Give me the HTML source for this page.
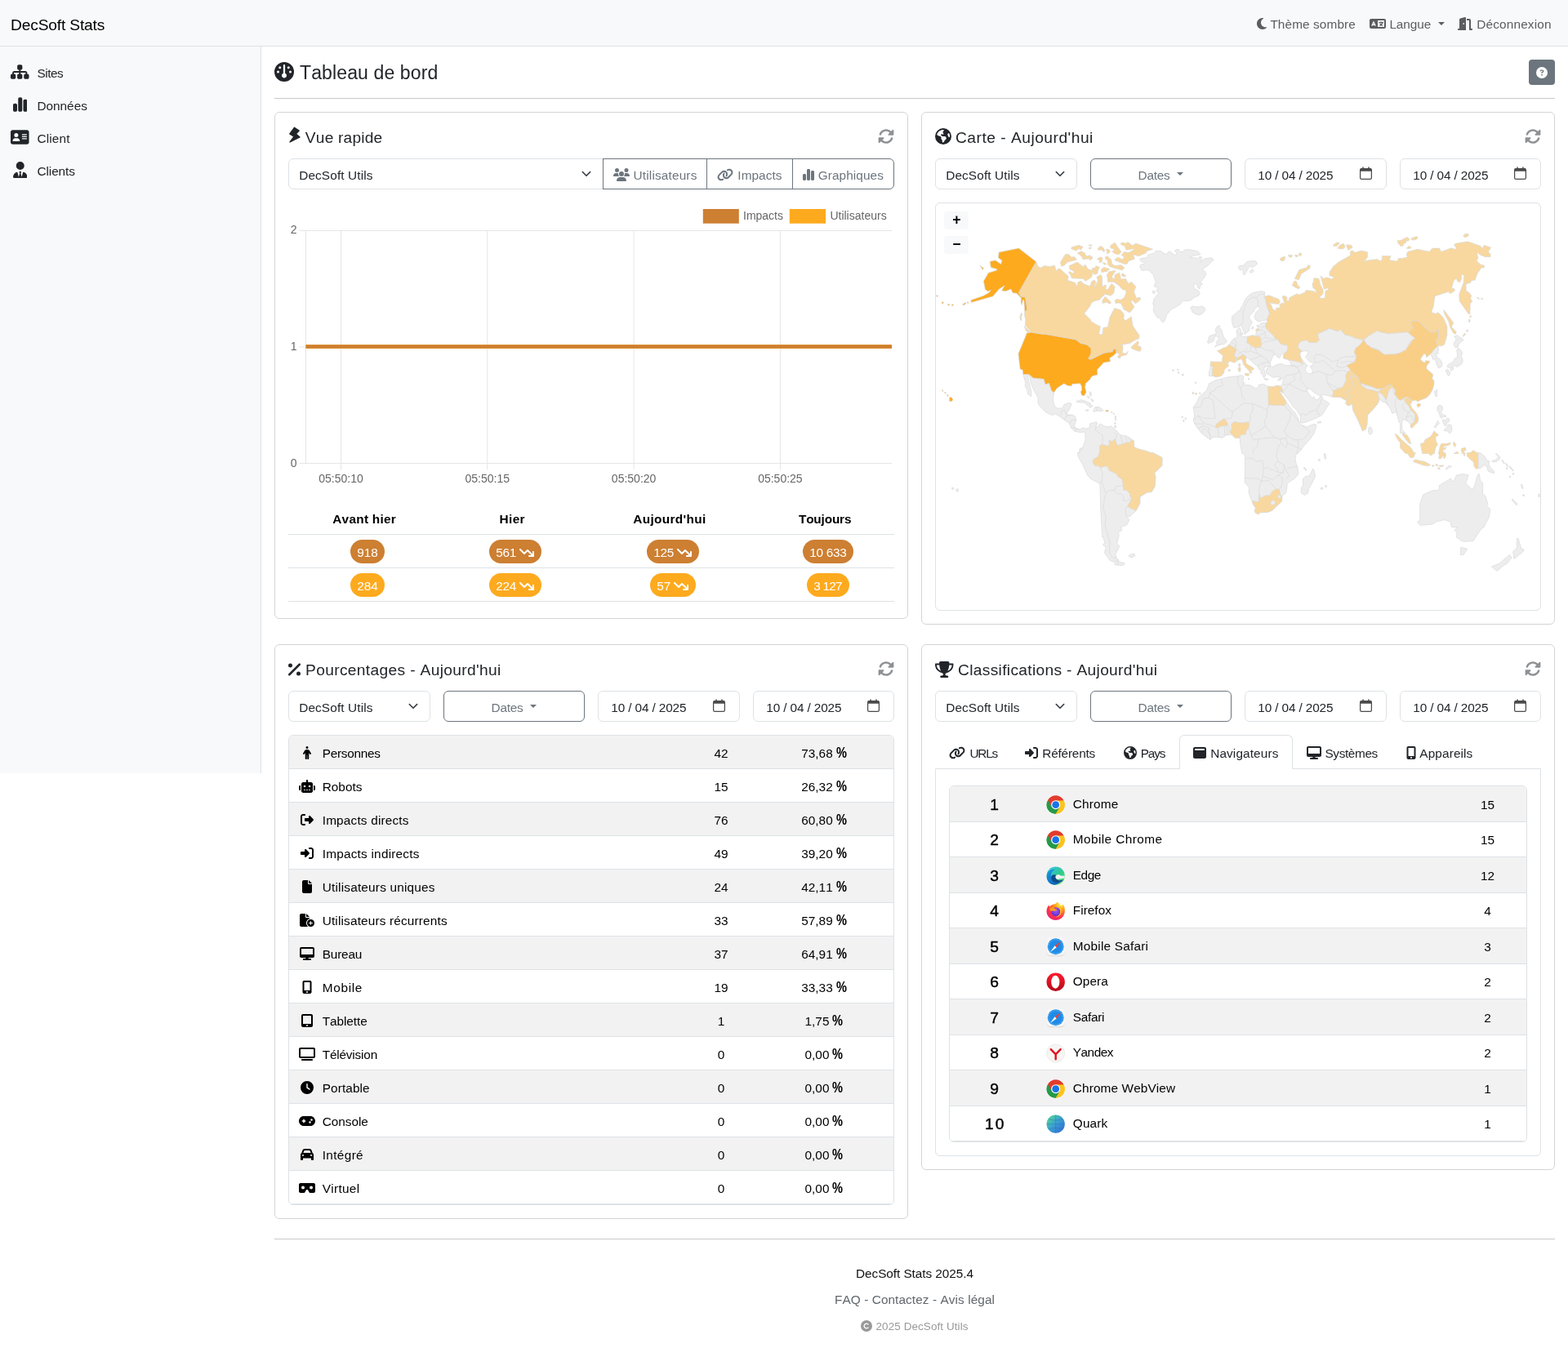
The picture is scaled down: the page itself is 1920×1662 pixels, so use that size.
<!DOCTYPE html>
<html lang="fr">
<head>
<meta charset="utf-8">
<title>DecSoft Stats - Tableau de bord</title>
<style>
*{box-sizing:border-box}
html,body{margin:0;padding:0;width:1920px;height:1662px;overflow:hidden;background:#fff}
body{position:relative;font-family:"Liberation Sans",sans-serif;font-size:16px;color:#212529;font-kerning:none;-webkit-font-smoothing:antialiased}
#page{position:absolute;left:0;top:0;width:1920px;height:1662px;overflow:hidden;will-change:transform;transform:translateZ(0)}
.t{position:absolute;white-space:pre;line-height:1;margin:0;font-weight:400}
.i{position:absolute;display:block}
.b{position:absolute}
.card{position:absolute;border:1px solid #d4d4d4;border-radius:6px;background:#fff}
.fc{position:absolute;border:1px solid #dee2e6;border-radius:6px;background:#fff}
.btn{position:absolute;border:1px solid #6c757d;border-radius:6px;background:transparent}
.hr{position:absolute;height:1px;background:#c8c9ca}
.row{position:absolute;left:0;right:0;border-top:1px solid #dee2e6}
.odd{background:#f2f2f2}
.pill{position:absolute;border-radius:50rem;height:29px}
svg text{font-family:"Liberation Sans",sans-serif}
</style>
</head>
<body>
<div id="page">
<nav class="b" style="left:0;top:0;width:1920px;height:57px;background:#f8f9fa;border-bottom:1px solid #dee2e6">
<span class="t" style="left:13px;top:20.65px;font-size:19.2px;color:#000;letter-spacing:-0.16px;">DecSoft Stats</span>
<svg class="i" style="left:1538.8px;top:21.2px;" width="12" height="16" viewBox="0 0 384 512" fill="#5b5d5f" aria-hidden="true"><path d="M223.5 32C100 32 0 132.3 0 256S100 480 223.5 480c60.6 0 115.5-24.2 155.8-63.4c5-4.9 6.3-12.5 3.1-18.7s-10.1-9.7-17-8.5c-9.8 1.7-19.8 2.6-30.1 2.6c-96.9 0-175.5-78.8-175.5-176c0-65.8 36-123.1 89.3-153.3c6.1-3.5 9.2-10.5 7.7-17.3s-7.3-11.9-14.3-12.5c-6.3-.5-12.6-.8-19-.8z"/></svg>
<span class="t" style="left:1555.4px;top:21.8px;font-size:15.36px;color:#5b5d5f;letter-spacing:0.1px;">Thème sombre</span>
<svg class="i" style="left:1677.3px;top:21.2px;" width="20" height="16" viewBox="0 0 640 512" fill="#5b5d5f" aria-hidden="true"><path d="M0 128C0 92.7 28.7 64 64 64l192 0 48 0 16 0 256 0c35.3 0 64 28.7 64 64l0 256c0 35.3-28.7 64-64 64l-256 0-16 0-48 0L64 448c-35.3 0-64-28.7-64-64L0 128zm320 0l0 256 256 0 0-256-256 0zM178.3 175.9c-3.2-7.2-10.4-11.9-18.3-11.9s-15.1 4.7-18.3 11.9l-64 144c-4.5 10.1 .1 21.9 10.2 26.4s21.9-.1 26.4-10.2l8.9-20.1 73.6 0 8.9 20.1c4.5 10.1 16.3 14.6 26.4 10.2s14.6-16.3 10.2-26.4l-64-144zM160 233.2L179 276l-38 0 19-42.8zM448 164c11 0 20 9 20 20l0 4 44 0 16 0c11 0 20 9 20 20s-9 20-20 20l-2 0-1.6 4.5c-8.9 24.4-22.4 46.6-39.6 65.4c.9 .6 1.8 1.1 2.7 1.6l18.9 11.3c9.5 5.7 12.5 18 6.9 27.4s-18 12.5-27.4 6.9l-18.9-11.3c-4.5-2.7-8.8-5.5-13.1-8.5c-10.6 7.5-21.9 14-34 19.4l-3.6 1.6c-10.1 4.5-21.9-.1-26.4-10.2s.1-21.9 10.2-26.4l3.6-1.6c6.4-2.9 12.6-6.1 18.5-9.8l-12.2-12.2c-7.8-7.8-7.8-20.5 0-28.3s20.5-7.8 28.3 0l14.6 14.6 .5 .5c12.4-13.1 22.5-28.3 29.8-45L448 228l-72 0c-11 0-20-9-20-20s9-20 20-20l52 0 0-4c0-11 9-20 20-20z"/></svg>
<span class="t" style="left:1701.4px;top:21.8px;font-size:15.36px;color:#5b5d5f;letter-spacing:-0.09px;">Langue</span>
<span class="b" style="left:1760.6px;top:26.8px;width:0;height:0;border-left:4.2px solid transparent;border-right:4.2px solid transparent;border-top:4.6px solid #5b5d5f"></span>
<svg class="i" style="left:1785px;top:21.2px;" width="18" height="16" viewBox="0 0 576 512" fill="#5b5d5f" aria-hidden="true"><path d="M320 32c0-9.9-4.5-19.2-12.3-25.2S289.8-1.4 280.2 1l-179.9 45C79 51.3 64 70.5 64 92.5L64 448l-32 0c-17.7 0-32 14.3-32 32s14.3 32 32 32l64 0 192 0 32 0 0-32 0-448zM256 256c0 17.7-10.7 32-24 32s-24-14.3-24-32s10.7-32 24-32s24 14.3 24 32zm96-128l96 0 0 352c0 17.7 14.3 32 32 32l64 0c17.7 0 32-14.3 32-32s-14.3-32-32-32l-32 0 0-320c0-35.3-28.7-64-64-64l-96 0 0 64z"/></svg>
<span class="t" style="left:1808.2px;top:21.8px;font-size:15.36px;color:#5b5d5f;letter-spacing:0.17px;">Déconnexion</span>
</nav>
<aside class="b" style="left:0;top:57px;width:320px;height:890px;background:#f8f9fa;border-right:1px solid #dee2e6">
<svg class="i" style="left:13.25px;top:21px;" width="22.5" height="20" viewBox="0 0 576 512" fill="#212529" aria-hidden="true"><path d="M208 80c0-26.5 21.5-48 48-48l64 0c26.5 0 48 21.5 48 48l0 64c0 26.5-21.5 48-48 48l-8 0 0 40 152 0c30.9 0 56 25.1 56 56l0 32 8 0c26.5 0 48 21.5 48 48l0 64c0 26.5-21.5 48-48 48l-64 0c-26.5 0-48-21.5-48-48l0-64c0-26.5 21.5-48 48-48l8 0 0-32c0-4.4-3.6-8-8-8l-152 0 0 40 8 0c26.5 0 48 21.5 48 48l0 64c0 26.5-21.5 48-48 48l-64 0c-26.5 0-48-21.5-48-48l0-64c0-26.5 21.5-48 48-48l8 0 0-40-152 0c-4.4 0-8 3.6-8 8l0 32 8 0c26.5 0 48 21.5 48 48l0 64c0 26.5-21.5 48-48 48l-64 0c-26.5 0-48-21.5-48-48l0-64c0-26.5 21.5-48 48-48l8 0 0-32c0-30.9 25.1-56 56-56l152 0 0-40-8 0c-26.5 0-48-21.5-48-48l0-64z"/></svg>
<span class="t" style="left:45.4px;top:24.6px;font-size:15.36px;color:#212529;letter-spacing:-0.46px;">Sites</span>
<svg class="i" style="left:15.75px;top:61px;" width="17.5" height="20" viewBox="0 0 448 512" fill="#212529" aria-hidden="true"><path d="M160 80c0-26.5 21.5-48 48-48l32 0c26.5 0 48 21.5 48 48l0 352c0 26.5-21.5 48-48 48l-32 0c-26.5 0-48-21.5-48-48l0-352zM0 272c0-26.5 21.5-48 48-48l32 0c26.5 0 48 21.5 48 48l0 160c0 26.5-21.5 48-48 48l-32 0c-26.5 0-48-21.5-48-48L0 272zM368 96l32 0c26.5 0 48 21.5 48 48l0 288c0 26.5-21.5 48-48 48l-32 0c-26.5 0-48-21.5-48-48l0-288c0-26.5 21.5-48 48-48z"/></svg>
<span class="t" style="left:45.4px;top:64.6px;font-size:15.36px;color:#212529;">Données</span>
<svg class="i" style="left:13.25px;top:101px;" width="22.5" height="20" viewBox="0 0 576 512" fill="#212529" aria-hidden="true"><path d="M64 32C28.7 32 0 60.7 0 96L0 416c0 35.3 28.7 64 64 64l448 0c35.3 0 64-28.7 64-64l0-320c0-35.3-28.7-64-64-64L64 32zm80 256l64 0c44.2 0 80 35.8 80 80c0 8.8-7.2 16-16 16L80 384c-8.8 0-16-7.2-16-16c0-44.2 35.8-80 80-80zm-32-96a64 64 0 1 1 128 0 64 64 0 1 1 -128 0zm256-32l128 0c8.8 0 16 7.2 16 16s-7.2 16-16 16l-128 0c-8.8 0-16-7.2-16-16s7.2-16 16-16zm0 64l128 0c8.8 0 16 7.2 16 16s-7.2 16-16 16l-128 0c-8.8 0-16-7.2-16-16s7.2-16 16-16zm0 64l128 0c8.8 0 16 7.2 16 16s-7.2 16-16 16l-128 0c-8.8 0-16-7.2-16-16s7.2-16 16-16z"/></svg>
<span class="t" style="left:45.4px;top:104.6px;font-size:15.36px;color:#212529;letter-spacing:0.15px;">Client</span>
<svg class="i" style="left:15.75px;top:141px;" width="17.5" height="20" viewBox="0 0 448 512" fill="#212529" aria-hidden="true"><path d="M96 128a128 128 0 1 0 256 0A128 128 0 1 0 96 128zm94.5 200.2l18.6 31L175.8 483.1l-36-146.9c-2-8.1-9.8-13.4-17.9-11.3C51.9 342.4 0 405.8 0 481.3c0 17 13.8 30.7 30.7 30.7l131.7 0c0 0 0 0 .1 0l5.5 0 112 0 5.5 0c0 0 0 0 .1 0l131.7 0c17 0 30.7-13.8 30.7-30.7c0-75.5-51.9-138.9-121.9-156.4c-8.1-2-15.9 3.3-17.9 11.3l-36 146.9L238.9 359.2l18.6-31c6.4-10.7-1.3-24.2-13.7-24.2L224 304l-19.7 0c-12.4 0-20.1 13.6-13.7 24.2z"/></svg>
<span class="t" style="left:45.4px;top:144.6px;font-size:15.36px;color:#212529;letter-spacing:-0.06px;">Clients</span>
</aside>
<main>
<svg class="i" style="left:336px;top:76px;" width="24" height="24" viewBox="0 0 512 512" fill="#212529" aria-hidden="true"><path d="M0 256a256 256 0 1 1 512 0A256 256 0 1 1 0 256zm320 96c0-26.9-16.5-49.9-40-59.3L280 88c0-13.3-10.7-24-24-24s-24 10.7-24 24l0 204.7c-23.5 9.5-40 32.5-40 59.3c0 35.3 28.7 64 64 64s64-28.7 64-64zM144 176a32 32 0 1 0 0-64 32 32 0 1 0 0 64zm-16 80a32 32 0 1 0 -64 0 32 32 0 1 0 64 0zm288 32a32 32 0 1 0 0-64 32 32 0 1 0 0 64zM400 144a32 32 0 1 0 -64 0 32 32 0 1 0 64 0z"/></svg>
<h1 class="t" style="left:367px;top:78.2px;font-size:23.04px;color:#212529;letter-spacing:0.11px;">Tableau de bord</h1>
<div class="b" style="left:1872px;top:73px;width:32px;height:31px;background:#6c757d;border-radius:4px"></div>
<svg class="i" style="left:1881px;top:81.5px;" width="14" height="14" viewBox="0 0 512 512" fill="#fff" aria-hidden="true"><path d="M256 512A256 256 0 1 0 256 0a256 256 0 1 0 0 512zM169.8 165.3c7.9-22.3 29.1-37.3 52.8-37.3l58.3 0c34.9 0 63.1 28.3 63.1 63.1c0 22.6-12.1 43.5-31.7 54.8L280 264.4c-.2 13-10.9 23.6-24 23.6c-13.3 0-24-10.7-24-24l0-13.5c0-8.6 4.6-16.5 12.1-20.8l44.3-25.4c4.7-2.7 7.6-7.7 7.6-13.1c0-8.4-6.8-15.1-15.1-15.1l-58.3 0c-3.4 0-6.4 2.1-7.5 5.3l-.4 1.2c-4.4 12.5-18.2 19-30.6 14.6s-19-18.2-14.6-30.6l.4-1.2zM224 352a32 32 0 1 1 64 0 32 32 0 1 1 -64 0z"/></svg>
<div class="hr" style="left:336px;top:120px;width:1568px"></div>
<section class="card" style="left:336px;top:137px;width:776px;height:621px">
<svg class="i" style="left:15px;top:16px" width="18" height="22" viewBox="352 154 18 22" aria-hidden="true"><path d="M360.5 156.2 L366.2 160 L362.4 164 L367.1 168 L355 174 L359.9 167.3 L354.8 163.9Z" fill="#212529" stroke="#212529" stroke-width="1.3" stroke-linejoin="round"/></svg>
<h2 class="t" style="left:36.8px;top:20.95px;font-size:19.2px;color:#212529;letter-spacing:0.18px;">Vue rapide</h2>
<svg class="i" style="left:738px;top:19px;" width="20" height="20" viewBox="0 0 512 512" fill="#8e9194" aria-hidden="true"><path d="M142.9 142.9c-17.5 17.5-30.1 38-37.8 59.8c-5.9 16.7-24.2 25.4-40.8 19.5s-25.4-24.2-19.5-40.8C55.6 150.7 73.2 122 97.6 97.6c87.2-87.2 228.3-87.5 315.8-1L455 55c6.9-6.9 17.2-8.9 26.2-5.2s14.8 12.5 14.8 22.2l0 128c0 13.3-10.7 24-24 24l-8.4 0c0 0 0 0 0 0L344 224c-9.7 0-18.5-5.8-22.2-14.8s-1.7-19.3 5.2-26.2l41.1-41.1c-62.6-61.5-163.1-61.2-225.3 1zM16 312c0-13.3 10.7-24 24-24l7.6 0 .7 0L168 288c9.7 0 18.5 5.8 22.2 14.8s1.7 19.3-5.2 26.2l-41.1 41.1c62.6 61.5 163.1 61.2 225.3-1c17.5-17.5 30.1-38 37.8-59.8c5.9-16.7 24.2-25.4 40.8-19.5s25.4 24.2 19.5 40.8c-10.8 30.6-28.4 59.3-52.9 83.8c-87.2 87.2-228.3 87.5-315.8 1L57 457c-6.9 6.9-17.2 8.9-26.2 5.2S16 449.7 16 440l0-119.6 0-.7 0-7.6z"/></svg>
<div class="fc" style="left:16px;top:56px;width:386px;height:38px;border-radius:6px 0 0 6px"></div>
<span class="t" style="left:29.2px;top:68.6px;font-size:15.36px;color:#212529;letter-spacing:0.12px;">DecSoft Utils</span>
<svg class="i" style="left:373.1px;top:69.3px" width="16" height="12" viewBox="0 0 16 12"><path d="M3.3 3.5 L8 8.3 L12.7 3.5" fill="none" stroke="#343a40" stroke-width="1.6" stroke-linecap="round" stroke-linejoin="round"/></svg>
<div class="btn" style="left:401px;top:56px;width:128px;height:38px;border-radius:0"></div>
<div class="btn" style="left:528px;top:56px;width:106px;height:38px;border-radius:0"></div>
<div class="btn" style="left:633px;top:56px;width:125px;height:38px;border-radius:0 6px 6px 0"></div>
<svg class="i" style="left:414.2px;top:67.8px;" width="20" height="16" viewBox="0 0 640 512" fill="#6c757d" aria-hidden="true"><path d="M144 0a80 80 0 1 1 0 160A80 80 0 1 1 144 0zM512 0a80 80 0 1 1 0 160A80 80 0 1 1 512 0zM0 298.7C0 239.8 47.8 192 106.7 192l42.7 0c15.9 0 31 3.5 44.6 9.7c-1.3 7.2-1.9 14.7-1.9 22.3c0 38.2 16.8 72.5 43.3 96c-.2 0-.4 0-.7 0L21.3 320C9.6 320 0 310.4 0 298.7zM405.3 320c-.2 0-.4 0-.7 0c26.6-23.5 43.3-57.8 43.3-96c0-7.6-.7-15-1.9-22.3c13.6-6.3 28.7-9.7 44.6-9.7l42.7 0C592.2 192 640 239.8 640 298.7c0 11.8-9.6 21.3-21.3 21.3l-213.3 0zM224 224a96 96 0 1 1 192 0 96 96 0 1 1 -192 0zM128 485.3C128 411.7 187.7 352 261.3 352l117.3 0C452.3 352 512 411.7 512 485.3c0 14.7-11.9 26.7-26.7 26.7l-330.7 0c-14.7 0-26.7-11.9-26.7-26.7z"/></svg>
<span class="t" style="left:438.6px;top:68.8px;font-size:15.36px;color:#6c757d;letter-spacing:0.16px;">Utilisateurs</span>
<svg class="i" style="left:541.2px;top:67.8px;" width="20" height="16" viewBox="0 0 640 512" fill="#6c757d" aria-hidden="true"><path d="M579.8 267.7c56.5-56.5 56.5-148 0-204.5c-50-50-128.8-56.5-186.3-15.4l-1.6 1.1c-14.4 10.3-17.7 30.3-7.4 44.6s30.3 17.7 44.6 7.4l1.6-1.1c32.1-22.9 76-19.3 103.8 8.6c31.5 31.5 31.5 82.5 0 114L422.3 334.8c-31.5 31.5-82.5 31.5-114 0c-27.9-27.9-31.5-71.8-8.6-103.8l1.1-1.6c10.3-14.4 6.9-34.4-7.4-44.6s-34.4-6.9-44.6 7.4l-1.1 1.6C206.5 251.2 213 330 263 380c56.5 56.5 148 56.5 204.5 0L579.8 267.7zM60.2 244.3c-56.5 56.5-56.5 148 0 204.5c50 50 128.8 56.5 186.3 15.4l1.6-1.1c14.4-10.3 17.7-30.3 7.4-44.6s-30.3-17.7-44.6-7.4l-1.6 1.1c-32.1 22.9-76 19.3-103.8-8.6C74 372 74 321 105.5 289.5L217.7 177.2c31.5-31.5 82.5-31.5 114 0c27.9 27.9 31.5 71.8 8.6 103.9l-1.1 1.6c-10.3 14.4-6.9 34.4 7.4 44.6s34.4 6.9 44.6-7.4l1.1-1.6C433.5 260.8 427 182 377 132c-56.5-56.5-148-56.5-204.5 0L60.2 244.3z"/></svg>
<span class="t" style="left:566.3px;top:68.8px;font-size:15.36px;color:#6c757d;letter-spacing:0.07px;">Impacts</span>
<svg class="i" style="left:646px;top:67.8px;" width="14" height="16" viewBox="0 0 448 512" fill="#6c757d" aria-hidden="true"><path d="M160 80c0-26.5 21.5-48 48-48l32 0c26.5 0 48 21.5 48 48l0 352c0 26.5-21.5 48-48 48l-32 0c-26.5 0-48-21.5-48-48l0-352zM0 272c0-26.5 21.5-48 48-48l32 0c26.5 0 48 21.5 48 48l0 160c0 26.5-21.5 48-48 48l-32 0c-26.5 0-48-21.5-48-48L0 272zM368 96l32 0c26.5 0 48 21.5 48 48l0 288c0 26.5-21.5 48-48 48l-32 0c-26.5 0-48-21.5-48-48l0-288c0-26.5 21.5-48 48-48z"/></svg>
<span class="t" style="left:664.7px;top:68.8px;font-size:15.36px;color:#6c757d;letter-spacing:0.09px;">Graphiques</span>
<svg class="i" style="left:16px;top:110px" width="742" height="352" viewBox="353 248 742 352" font-size="14" fill="#666"><rect x="860.8" y="256" width="44" height="17.7" fill="#cd7f32"/><rect x="966.8" y="256" width="44.2" height="17.7" fill="#fdaa1e"/><text x="910" y="269.2">Impacts</text><text x="1016.4" y="269.2">Utilisateurs</text><g stroke="#e5e5e5" stroke-width="1" fill="none"><path d="M366.5 282.5 H1092"/><path d="M366.5 425 H1092"/><path d="M366.5 567.5 H1092"/><path d="M374.5 282.5 V567.5"/><path d="M417.5 282.5 V575.5"/><path d="M596.8 282.5 V575.5"/><path d="M776.1 282.5 V575.5"/><path d="M955.4 282.5 V575.5"/></g><path d="M374.5 424.6 H1092" stroke="#f0a030" stroke-width="5" fill="none"/><path d="M374.5 424.6 H1092" stroke="#cd7f32" stroke-width="4" fill="none"/><text x="363.5" y="285.8" text-anchor="end">2</text><text x="363.5" y="428.8" text-anchor="end">1</text><text x="363.5" y="571.8" text-anchor="end">0</text><text x="417.5" y="590.8" text-anchor="middle">05:50:10</text><text x="596.8" y="590.8" text-anchor="middle">05:50:15</text><text x="776.1" y="590.8" text-anchor="middle">05:50:20</text><text x="955.4" y="590.8" text-anchor="middle">05:50:25</text></svg>
<span class="t" style="left:70.25px;top:490.3px;font-size:15.36px;color:#000;font-weight:700;letter-spacing:0.27px;">Avant hier</span>
<span class="t" style="left:274.4px;top:490.3px;font-size:15.36px;color:#000;font-weight:700;letter-spacing:0.44px;">Hier</span>
<span class="t" style="left:438.2px;top:490.3px;font-size:15.36px;color:#000;font-weight:700;letter-spacing:0.36px;">Aujourd'hui</span>
<span class="t" style="left:640.95px;top:490.3px;font-size:15.36px;color:#000;font-weight:700;letter-spacing:-0.17px;">Toujours</span>
<div class="b" style="left:16px;top:516px;width:742px;height:1px;background:#dee2e6"></div>
<div class="b" style="left:16px;top:557px;width:742px;height:1px;background:#dee2e6"></div>
<div class="b" style="left:16px;top:598px;width:742px;height:1px;background:#dee2e6"></div>
<div class="pill" style="left:92.1px;top:523px;width:41.8px;height:29px;background:#cd7f32"></div>
<span class="t" style="left:100.3px;top:531px;font-size:15.36px;color:#fff;letter-spacing:-0.11px;">918</span>
<div class="pill" style="left:262px;top:523px;width:64px;height:29px;background:#cd7f32"></div>
<span class="t" style="left:270.2px;top:531px;font-size:15.36px;color:#fff;letter-spacing:-0.21px;">561</span>
<svg class="i" style="left:299.4px;top:530.6px;" width="18" height="16" viewBox="0 0 576 512" fill="#fff" aria-hidden="true"><path d="M384 352c-17.7 0-32 14.3-32 32s14.3 32 32 32l160 0c17.7 0 32-14.3 32-32l0-160c0-17.7-14.3-32-32-32s-32 14.3-32 32l0 82.7L342.6 137.4c-12.5-12.5-32.8-12.5-45.3 0L192 242.7 54.6 105.4c-12.5-12.5-32.8-12.5-45.3 0s-12.5 32.8 0 45.3l160 160c12.5 12.5 32.8 12.5 45.3 0L320 205.3 466.7 352 384 352z"/></svg>
<div class="pill" style="left:455.1px;top:523px;width:63.8px;height:29px;background:#cd7f32"></div>
<span class="t" style="left:463.3px;top:531px;font-size:15.36px;color:#fff;letter-spacing:-0.31px;">125</span>
<svg class="i" style="left:492.3px;top:530.6px;" width="18" height="16" viewBox="0 0 576 512" fill="#fff" aria-hidden="true"><path d="M384 352c-17.7 0-32 14.3-32 32s14.3 32 32 32l160 0c17.7 0 32-14.3 32-32l0-160c0-17.7-14.3-32-32-32s-32 14.3-32 32l0 82.7L342.6 137.4c-12.5-12.5-32.8-12.5-45.3 0L192 242.7 54.6 105.4c-12.5-12.5-32.8-12.5-45.3 0s-12.5 32.8 0 45.3l160 160c12.5 12.5 32.8 12.5 45.3 0L320 205.3 466.7 352 384 352z"/></svg>
<div class="pill" style="left:646px;top:523px;width:62px;height:29px;background:#cd7f32"></div>
<span class="t" style="left:654.2px;top:531px;font-size:15.36px;color:#fff;letter-spacing:-0.28px;">10 633</span>
<div class="pill" style="left:92.1px;top:564px;width:41.8px;height:29px;background:#fdaa1e"></div>
<span class="t" style="left:100.3px;top:572px;font-size:15.36px;color:#fff;letter-spacing:-0.11px;">284</span>
<div class="pill" style="left:262px;top:564px;width:64px;height:29px;background:#fdaa1e"></div>
<span class="t" style="left:270.2px;top:572px;font-size:15.36px;color:#fff;letter-spacing:-0.21px;">224</span>
<svg class="i" style="left:299.4px;top:571.6px;" width="18" height="16" viewBox="0 0 576 512" fill="#fff" aria-hidden="true"><path d="M384 352c-17.7 0-32 14.3-32 32s14.3 32 32 32l160 0c17.7 0 32-14.3 32-32l0-160c0-17.7-14.3-32-32-32s-32 14.3-32 32l0 82.7L342.6 137.4c-12.5-12.5-32.8-12.5-45.3 0L192 242.7 54.6 105.4c-12.5-12.5-32.8-12.5-45.3 0s-12.5 32.8 0 45.3l160 160c12.5 12.5 32.8 12.5 45.3 0L320 205.3 466.7 352 384 352z"/></svg>
<div class="pill" style="left:459.05px;top:564px;width:55.9px;height:29px;background:#fdaa1e"></div>
<span class="t" style="left:467.25px;top:572px;font-size:15.36px;color:#fff;letter-spacing:0.02px;">57</span>
<svg class="i" style="left:488.35px;top:571.6px;" width="18" height="16" viewBox="0 0 576 512" fill="#fff" aria-hidden="true"><path d="M384 352c-17.7 0-32 14.3-32 32s14.3 32 32 32l160 0c17.7 0 32-14.3 32-32l0-160c0-17.7-14.3-32-32-32s-32 14.3-32 32l0 82.7L342.6 137.4c-12.5-12.5-32.8-12.5-45.3 0L192 242.7 54.6 105.4c-12.5-12.5-32.8-12.5-45.3 0s-12.5 32.8 0 45.3l160 160c12.5 12.5 32.8 12.5 45.3 0L320 205.3 466.7 352 384 352z"/></svg>
<div class="pill" style="left:651.15px;top:564px;width:51.7px;height:29px;background:#fdaa1e"></div>
<span class="t" style="left:659.35px;top:572px;font-size:15.36px;color:#fff;letter-spacing:-0.78px;">3 127</span>
</section>
<section class="card" style="left:1128px;top:137px;width:776px;height:628px">
<svg class="i" style="left:16px;top:19.2px;" width="20" height="20" viewBox="0 0 512 512" fill="#212529" aria-hidden="true"><path d="M57.7 193l9.4 16.4c8.3 14.5 21.9 25.2 38 29.8L163 255.7c17.2 4.9 29 20.6 29 38.5l0 39.9c0 11 6.2 21 16 25.9s16 14.9 16 25.9l0 39c0 15.6 14.9 26.9 29.9 22.6c16.1-4.6 28.6-17.5 32.7-33.8l2.8-11.2c4.2-16.9 15.2-31.4 30.3-40l8.1-4.6c15-8.5 24.2-24.5 24.2-41.7l0-8.3c0-12.7-5.1-24.9-14.1-33.9l-3.9-3.9c-9-9-21.2-14.1-33.9-14.1L257 256c-11.1 0-22.1-2.9-31.8-8.4l-34.5-19.7c-4.3-2.5-7.6-6.5-9.2-11.2c-3.2-9.6 1.1-20 10.2-24.5l5.9-3c6.6-3.3 14.3-3.9 21.3-1.5l23.2 7.7c8.2 2.7 17.2-.4 21.9-7.5c4.7-7 4.2-16.3-1.2-22.8l-13.6-16.3c-10-12-9.9-29.5 .3-41.3l15.7-18.3c8.8-10.3 10.2-25 3.5-36.7l-2.4-4.2c-3.5-.2-6.9-.3-10.4-.3C163.1 48 84.4 108.9 57.7 193zM464 256c0-36.8-9.6-71.4-26.4-101.5L412 164.8c-15.7 6.3-23.8 23.8-18.5 39.8l16.9 50.7c3.5 10.4 12 18.3 22.6 20.9l29.1 7.3c1.2-9 1.8-18.2 1.8-27.5zM0 256a256 256 0 1 1 512 0A256 256 0 1 1 0 256z"/></svg>
<h2 class="t" style="left:41px;top:20.95px;font-size:19.2px;color:#212529;letter-spacing:0.5px;">Carte - Aujourd'hui</h2>
<svg class="i" style="left:738px;top:19px;" width="20" height="20" viewBox="0 0 512 512" fill="#8e9194" aria-hidden="true"><path d="M142.9 142.9c-17.5 17.5-30.1 38-37.8 59.8c-5.9 16.7-24.2 25.4-40.8 19.5s-25.4-24.2-19.5-40.8C55.6 150.7 73.2 122 97.6 97.6c87.2-87.2 228.3-87.5 315.8-1L455 55c6.9-6.9 17.2-8.9 26.2-5.2s14.8 12.5 14.8 22.2l0 128c0 13.3-10.7 24-24 24l-8.4 0c0 0 0 0 0 0L344 224c-9.7 0-18.5-5.8-22.2-14.8s-1.7-19.3 5.2-26.2l41.1-41.1c-62.6-61.5-163.1-61.2-225.3 1zM16 312c0-13.3 10.7-24 24-24l7.6 0 .7 0L168 288c9.7 0 18.5 5.8 22.2 14.8s1.7 19.3-5.2 26.2l-41.1 41.1c62.6 61.5 163.1 61.2 225.3-1c17.5-17.5 30.1-38 37.8-59.8c5.9-16.7 24.2-25.4 40.8-19.5s25.4 24.2 19.5 40.8c-10.8 30.6-28.4 59.3-52.9 83.8c-87.2 87.2-228.3 87.5-315.8 1L57 457c-6.9 6.9-17.2 8.9-26.2 5.2S16 449.7 16 440l0-119.6 0-.7 0-7.6z"/></svg>
<div class="fc" style="left:16px;top:56px;width:174px;height:38px;"></div>
<span class="t" style="left:29.2px;top:68.6px;font-size:15.36px;color:#212529;letter-spacing:0.12px;">DecSoft Utils</span>
<svg class="i" style="left:161px;top:69.3px" width="16" height="12" viewBox="0 0 16 12"><path d="M3.3 3.5 L8 8.3 L12.7 3.5" fill="none" stroke="#343a40" stroke-width="1.6" stroke-linecap="round" stroke-linejoin="round"/></svg>
<div class="btn" style="left:206px;top:56px;width:173px;height:38px;"></div>
<span class="t" style="left:264.6px;top:68.6px;font-size:15.36px;color:#6c757d;letter-spacing:-0.28px;">Dates</span>
<span class="b" style="left:311.6px;top:73px;width:0;height:0;border-left:4.2px solid transparent;border-right:4.2px solid transparent;border-top:4.6px solid #6c757d"></span>
<div class="fc" style="left:395px;top:56px;width:174px;height:38px;"></div>
<span class="t" style="left:411.3px;top:68.6px;font-size:15.36px;color:#212529;letter-spacing:-0.13px;">10 / 04 / 2025</span>
<svg class="i" style="left:534.8px;top:65.5px" width="17" height="17" viewBox="0 0 17 17"><rect x="1.6" y="2.6" width="13.8" height="12.8" rx="1.6" fill="none" stroke="#4a4a4a" stroke-width="1.25"/><path d="M1.6 3.6 a1 1 0 0 1 1-1 h11.8 a1 1 0 0 1 1 1 v2.2 h-13.8z M4.3 0.6h1.5v2.6H4.3z M11.2 0.6h1.5v2.6h-1.5z" fill="#4a4a4a"/></svg>
<div class="fc" style="left:585px;top:56px;width:173px;height:38px;"></div>
<span class="t" style="left:601.3px;top:68.6px;font-size:15.36px;color:#212529;letter-spacing:-0.13px;">10 / 04 / 2025</span>
<svg class="i" style="left:723.8px;top:65.5px" width="17" height="17" viewBox="0 0 17 17"><rect x="1.6" y="2.6" width="13.8" height="12.8" rx="1.6" fill="none" stroke="#4a4a4a" stroke-width="1.25"/><path d="M1.6 3.6 a1 1 0 0 1 1-1 h11.8 a1 1 0 0 1 1 1 v2.2 h-13.8z M4.3 0.6h1.5v2.6H4.3z M11.2 0.6h1.5v2.6h-1.5z" fill="#4a4a4a"/></svg>
<div class="b" style="left:16px;top:110px;width:742px;height:500px;border:1px solid #dee2e6;border-radius:6px;overflow:hidden;background:#fff">
<svg class="i" style="left:0;top:0" width="740" height="498" viewBox="0 0 740 498" stroke="#dadada" stroke-width="0.7" stroke-linejoin="round" fill-rule="evenodd"><path fill="#ededed" d="M737.73 356.27 738.03 359.64 739.41 359.44 739.21 355.98ZM720.21 356.67 718.63 356.96 719.02 358.85 720.41 358.65ZM711.5 410.4 711.5 421.78 706.56 426.73 708.04 435.64 719.42 426.24 719.92 423.76 716.95 423.27 712.99 410.11ZM716.25 344.59 717.94 349.54 719.22 349.05 717.64 344.4ZM706.06 361.91 705.57 363.89 711.01 369.83 712 367.85ZM707.35 330.25 706.06 330.54 706.56 332.52 707.74 332.22ZM701.61 322.33 706.36 327.97 707.55 327.28 703.09 322.03ZM687.26 450.48 695.67 443.06 698.64 442.07 705.07 434.15 702.6 430.2 690.23 441.08 680.33 445.04ZM702.1 334.2 702.6 335.89 703.78 335.69 703.39 333.91ZM697.65 318.86 699.43 322.03 700.62 321.64 698.84 318.67ZM698.44 323.81 698.84 325.99 700.02 325.79 699.63 323.62ZM693.89 314.41 692.7 314.71 695.47 318.86 696.66 318.37ZM685.28 314.41 680.83 315.4 681.82 316.89 686.27 316.39 690.23 313.42 690.72 310.45 686.76 306.49 685.28 306.99 688.74 310.45ZM678.85 323.81 676.87 319.36 677.86 315.9 673.9 314.41 672.91 310.95 666.48 305.51 663.8 305.51 663.8 324.8 666.48 324.8 671.42 320.84 674.39 321.83 676.37 328.27 683.3 330.74 683.79 328.27ZM637.28 398.03 634.81 401 638.27 401.5 637.28 408.92 644.21 413.87 648.17 414.36 658.06 413.37 667.96 398.53 670.93 397.04 677.36 384.18 678.85 374.78 674.39 370.32 675.88 368.35 672.91 358.45 669.45 355.48 669.74 342.42 666.48 339.65 665.49 331.53 663.51 332.22 658.56 349.05 656.09 350.04 648.66 343.11 652.13 332.72 645.2 331.53 637.28 333.21 634.31 340.14 631.84 340.64 630.85 336.88 616.3 345.58 616.5 349.54 614.52 351.52 608.58 351.72 598.19 355.98 596.21 357.46 592.75 368.35 592.75 387.64 589.29 390.61 593.25 394.57 608.58 392.89 612.54 390.12 622.44 387.64 629.86 390.12 631.35 396.55 638.27 396.55ZM642.73 421.29 642.23 430.49 646.19 430.49 650.64 423.27ZM646.19 167.43 643.72 164.96 641.24 163.97 638.27 161.49 634.81 162.98 637.28 166.94 634.81 169.91 634.31 173.86 636.29 176.83 639.26 176.34 640.25 172.38 642.73 169.91ZM625.9 200.09 628.38 201.57 632.33 200.09 635.3 198.61 637.28 200.58 642.23 198.11 644.71 195.14 645.2 191.68 643.22 187.22 644.71 183.27 642.73 179.8 640.25 177.33 637.78 179.31 638.77 188.21 634.81 190.69 634.31 193.66 631.35 195.14 627.39 197.62ZM629.86 202.56 630.85 205.33 633.82 203.06 633.32 200.58ZM628.38 323.81 631.84 322.33 627.88 321.34 623.92 325.3 625.41 325.99ZM621.94 277.77 622.93 278.76 625.9 278.76 629.37 281.73 631.84 278.76 631.35 272.33 628.38 270.35 625.9 274.31ZM627.39 211.47 629.56 209.49 629.37 206.52 626.4 203.06 624.22 204.54ZM626.4 262.93 624.42 265.9 620.46 264.91 621.45 269.86 623.43 272.83 625.9 271.84 625.41 268.87 628.38 267.38 628.87 264.41ZM620.46 258.97 618.48 256 620.46 252.54 619.96 248.58 617 247.1 614.03 249.08 614.03 253.53 616.5 257.49 617.49 261.94 619.47 263.42 620.46 261.45 624.42 261.45 624.42 259.96ZM615.02 201.08 617.49 201.57 619.96 198.61 619.47 194.65 616.5 190.19 613.53 188.71 613.04 183.76 615.51 180.79 615.02 174.36 611.55 177.33 608.09 181.29 605.62 184.75 607.1 186.73 608.58 191.18 611.55 190.69 612.54 195.64ZM610.07 274.31 611.55 274.81 616.5 269.36 614.52 266.39ZM613.53 227.8 610.07 230.77 612.05 236.71 613.73 236.71ZM359.42 173.08 364 176 367.33 180.17 365.25 186.42 369 191 379.83 189.33 379.83 189.09 381.97 189.7 384.94 191.68 388.9 195.64 393.84 199.59 395.82 203.55 398.79 204.54 397.31 207.51 400.28 210.48 401.27 213.45 403.74 211.47 401.76 202.56 403.74 200.09 409.66 199.1 405.72 201.57 404.24 204.54 404.73 208.5 408.69 210.48 412.65 213.45 418.58 212.46 422.54 213.45 425.51 214.44 424.52 220.38 422.54 224.33 417.1 223.15 413.64 224.83 406.71 224.33 400.77 221.37 395.33 222.36 394.83 225.32 391.86 226.81 384.94 222.85 378.51 222.36 378.51 222.52 376.53 220.87 376.04 216.42 377.03 212.46 374.06 210.48 370.1 211.47 357.23 212.95 349.81 214.93 342.88 216.42 334.47 220.87 331.5 229.28 327.05 232.75 322.6 236.71 319.63 243.14 315.18 250.06 316.16 256 316.66 260.95 315.18 264.91 316.66 269.86 320.62 275.79 325.57 281.73 331.01 286.19 336.45 289.65 336.95 287.67 341.89 286.19 347.34 286.68 349.81 287.67 356.24 283.71 362.18 283.71 366.14 287.18 372.08 287.18 373.07 297.57 375.05 306.47 376.95 306.47 378.02 308.97 378.51 309.46 378.51 329.64 378.21 329.75 378.21 341.13 378.51 341.36 378.51 342.62 383.45 347.56 382.96 354.49 388.9 369.33 391.86 373.79 390.08 375.77 391.37 379.23 394.83 380.72 397.31 378.74 406.71 378.24 411.66 376.26 423.53 364.88 424.03 357.95 428.48 354.99 429.96 347.56 429.96 343.11 438.38 337.67 443.82 332.22 442.83 323.32 440.85 317.88 439.86 311.94 441.54 306.47 443.32 306.47 450.25 297.57 458.17 288.66 463.12 281.73 466.09 271.84 463.12 270.35 454.21 273.82 448.27 271.84 444.31 268.37 443.32 262.93 439.37 256 435.41 252.04 428.48 242.15 421.55 231.76 421.06 228.29 423.04 231.26 425.51 232.25 434.42 244.13 437.39 249.08 442.33 254.02 446.29 260.95 446.29 266.89 447.28 269.36 453.22 267.88 461.14 264.91 468.06 261.94 473.51 258.48 477.96 251.05 481.92 245.12 474 240.17 473.01 236.71 470.04 237.2 468.06 240.66 464.11 240.17 462.62 236.21 461.14 239.18 454.71 230.27 454.71 227.3 458.17 227.3 461.14 230.27 468.06 234.73 471.53 236.21 474 234.23 484.39 236.71 487.86 237.2 494.78 237.2 503.2 241.65 501.71 245.12 504.68 248.09 507.65 247.1 509.63 244.62 510.62 253.03 517.55 266.89 522.49 278.76 526.45 276.78 527.94 270.85 528.43 259.47 536.35 251.05 541.3 245.12 543.28 240.17 547.23 243.14 550.7 244.13 553.17 247.1 557.13 253.03 558.61 257.49 561.09 256 564.06 256 567.03 267.88 568.51 269.65 568.51 281.24 571.97 281.73 574.94 281.24 570.98 277.77 570.48 269.86 571.97 264.41 576.92 266.39 581.37 270.85 586.32 267.38 586.81 258.48 581.86 253.53 578.9 248.09 574.94 243.63 573.45 239.67 569.5 240.86 569.5 182.16 574.94 178.81 580.88 171.89 583.84 166.44 587.31 164.96 581.86 162.98 578.77 160.77 578.4 158.16 573.95 156.68 568.51 156.19 568.51 159.65 547.23 159.65 542.29 158.16 540.28 160.51 500.67 160.51 495.28 154.7 491.82 156.68 481.92 153.22 468.06 159.65 467.64 160.51 412.76 160.51 411.34 157.66 405.92 155.63 404.23 150.89 404.91 146.15 399.15 146.49 396.78 148.18 394.41 152.25 395.77 155.63 393.06 156.31 391.7 159.69 392.25 162.44 388.9 161.99 383.95 162.98 379.83 163.35 379.83 163.08 377.05 163.36 375.2 163.27 372.33 161.83 373.58 157.25 372.75 153.5 371.67 153.07 371.39 152.25 370.95 152.78 370.67 152.67 368.01 156.31 368.69 161.72 369.42 162.67 367.33 165.17 364.62 165.79 363.35 167.48 361.92 168.92ZM409.68 198.61 409.68 194.65 412.65 186.73 416.61 184.75 418.58 185.25 417.59 187.72 420.56 189.7 422.54 185.74 427.49 182.28 425.51 186.73 425.51 189.7 430.46 191.18 434.42 194.65 434.91 198.61 428.48 198.61 423.53 196.63 418.58 197.12 411.66 200.58ZM445.8 185.74 446.29 181.78 452.23 180.79 456.19 181.29 455.2 184.75 452.23 187.72 457.18 193.66 461.63 195.14 462.13 197.62 458.17 199.59 461.14 204.54 460.64 208.5 455.2 208.5 452.23 204.54 452.73 200.58 455.2 199.59 447.28 189.7ZM373.09 159.69 374 161.83 374.37 161.61 374.44 161.72 376.08 160.58 376.13 160.37 375.25 158.08ZM529.42 280.74 531.4 283.22 533.87 281.73 534.37 277.77 532.39 273.82 529.92 274.81ZM477.96 345.09 476.48 346.08 476.97 348.06 478.75 347.07ZM475.19 306.79 476.18 313.13 477.76 312.73 476.97 306.99ZM471.03 348.36 471.53 350.33 473.8 350.04 473.51 348.06ZM467.08 267.88 467.57 269.36 471.53 268.87 471.53 267.38ZM468.36 313.72 469.05 315.7 470.54 315.4 470.04 313.52ZM461.63 324.8 457.18 334.2 452.73 334.2 449.26 337.67 449.76 345.09 447.28 348.55 447.28 354.49 451.24 357.46 455.99 354.49 456.19 350.53 462.62 338.66 464.6 333.71 463.12 327.28ZM451.74 323.62 450.25 323.81 453.02 327.57 454.21 326.98ZM418.58 215.43 419.57 217.21 423.04 215.92 422.54 213.94ZM370.72 131.26 367.33 134.64 362.59 138.7 362.59 145.48 364.62 152.25 367.33 151.91 371.39 150.89 373.42 148.18 375.46 153.6 378.5 160.37 380.19 158.34 383.58 156.31 383.92 151.57 387.64 145.48 383.58 140.74 384.26 137.69 388.32 133.29 391.03 128.55 394.41 126.18 396.78 128.55 395.09 130.58 391.7 133.97 390.01 138.7 391.7 142.77 395.09 145.14 398.48 144.12 405.25 142.77 406.26 140.74 408.63 135.32 403.89 121.78 404.23 118.39 401.86 115.01 402.54 112.3 402.88 108.58 398.48 107.56 388.32 109.59 384.93 111.62 380.87 115.01 378.16 118.39 376.13 123.81 372.75 129.23 373.42 131.6ZM401.76 214.44 402.75 216.22 406.21 216.42 406.71 214.93ZM392.72 149.88 393.4 151.23 395.09 150.21 394.41 148.86ZM391.7 70.66 384.93 70.66 382.41 71.24 381.97 71.08 381.62 71.43 380.53 71.68 378.84 74.05 376.13 76.08 371.39 76.75 370.04 78.45 372.75 82.17 374.78 81.16 376.13 82.51 376.13 86.57 378.16 87.59 383.91 76.6 387.3 78.45 387.51 78.3 387.91 78.5 393.84 74.05ZM383.97 83.48 385.93 85.63 389.54 82.85 389.27 82.57 389.39 82.46 387.3 80.48ZM387.98 150.89 386.29 152.92 387.3 154.62 389 152.25ZM383.75 214.24 382.46 214.44 382.56 215.92 383.75 215.92ZM343.17 174.75 349 173.08 353.17 172.25 355.67 170.17 356.08 168.08 354 166 351.92 162.67 349.42 154.33 347.33 152.67 347.75 150.17 346.08 149.75 343.58 151.83 342.33 155.17 343.17 158.5 341.92 161 343.58 163.08 346.08 163.92 346.92 166 344.42 168.5 343.17 170.58 344.42 172.25 342.75 173.92 341.5 176.42ZM337.33 161.42 334.42 163.08 334 166 332.33 170.17 333.58 171.42 336.5 170.58 339.83 168.92 340.67 166 341.92 163.5 341.5 160.58ZM335.96 199.1 335.96 202.56 334.47 206.52 334.47 211.47 338.93 211.47 338.43 206.52 339.42 199.59ZM314.19 133.42 317.65 135.4 321.61 136.89 325.57 135.4 326.02 134.95 326.71 134.64 329.08 131.93 329.52 128.48 326.03 125.84 322.1 126.99 319.63 126.5 316.66 126.99 314.68 125.51 311.71 127.98 313.2 130.46ZM317.15 219.19 317.45 220.57 318.84 220.57 318.64 218.89ZM304.98 262.73 304.98 264.32 306.17 264.51 306.57 262.93ZM302.61 265.4 302.61 267.09 303.79 267.48 304.19 265.7ZM301.32 209.49 301.62 210.98 303.3 210.98 303.3 209.29ZM300.83 261.15 301.02 262.53 302.41 262.43 302.31 260.95ZM296.37 206.72 296.67 208.5 297.86 208.3 297.66 206.52ZM296.87 205.04 297.07 203.55 295.38 203.36ZM289.45 204.05 289.94 205.53 291.42 205.33 290.93 203.55ZM142.49 259.47 146.45 257.98 151.4 260.95 157.34 265.4 163.77 269.86 165.25 274.81 170.2 279.26 177.13 280.74 182.57 279.75 183.07 289.65 180.1 299.05 176.14 300.53 175.31 305.51 173.17 305.51 174.16 309.96 180.1 320.84 186.04 333.71 188.51 335.47 188.51 336.68 200.88 343.61 201.86 375.27 203.35 402.98 204.01 405.42 203.35 406.94 204.04 409.41 204.83 408.5 206.81 415.85 204.34 418.32 208.3 421.29 206.32 427.72 212.75 437.12 218.69 439.6 221.16 433.66 219.68 429.7 222.65 424.75 224.82 419.81 221.66 416.84 224.13 406.94 223.64 401.99 227.59 401 227.1 396.05 233.53 394.08 237 387.64 234.03 384.18 237.49 383.68 244.91 376.76 249.86 367.36 249.86 359.44 258.77 354 264.21 353.5 268.17 346.57 268.96 334.7 267.67 330.25 276.88 321.34 277.08 311.44 265.69 305.51 200.85 305.51 200.68 297.07 202.85 295.09 211.27 297.57 212.75 293.61 211.76 290.64 215.72 291.63 219.68 288.66 220.67 294.1 223.14 296.58 231.55 293.61 236.5 293.11 240.46 289.65 236.5 286.68 232.54 284.7 225.62 283.71 222.15 279.26 218.69 276.78 214.73 272.83 210.28 273.82 204.83 272.33 201.37 269.86 196.92 274.81 195.93 272.83 197.91 268.87 196.42 267.88 188.51 269.86 188.51 274.27 184.06 276.29 180.1 274.81 176.14 277.28 170.7 275.3 169.71 271.34 171.69 265.9 170.7 260.95 167.23 259.17 159.81 258.97 164.26 250.56 166.24 246.11 164.26 244.13 157.34 246.11 155.36 250.56 150.41 251.25 146.45 250.06 144.47 246.11 143.48 240.17 144.47 231.76 141.5 229.28 138.53 220.18 134.08 221.86 132.1 215.23 119.24 213.94 114.78 210.48 116.27 220.38 119.73 228.29 125.18 238.19 125.18 245.12 128.64 250.06 134.58 256ZM239.96 433.86 243.92 431.68 242.93 429.5 238.98 429.7 236.01 431.68 237.49 433.16ZM224.63 443.36 228.58 443.56 231.55 441.08 224.63 439.1 222.15 435.14 218.69 442.57ZM218.49 272.83 218.89 275.3 220.67 274.81 220.47 272.33ZM219.18 260.46 219.48 265.9 220.47 265.9 220.47 260.46ZM219.88 268.37 218.49 268.87 218.69 270.85 220.17 270.35ZM218 256.79 217.01 256.99 217.3 258.48 218.29 258.48ZM214.53 255.51 214.73 256.79 215.72 256.5 215.52 255.21ZM192.46 253.53 193.45 255.51 198.4 254.02 201.86 255.01 205.33 253.53 199.89 249.57 194.94 249.57ZM192.96 241.16 189.99 239.18 190.48 241.65 192.46 243.14ZM189.5 245.12 183.07 242.15 177.13 240.66 171.69 242.64 173.17 243.63 182.08 244.13 185.05 247.1 188.51 248.63 188.51 250.56 192.46 248.09 189.5 247.34ZM187.52 230.77 188.51 232 188.51 235.22 189.99 236.21 190.48 232.25 189.5 231.76 189.5 231.26ZM187.03 236.21 185.05 236.71 188.02 239.18ZM183.27 253.03 184.06 254.52 187.03 254.02 186.53 252.54ZM112.81 213.45 113.79 209.49 106.87 209.49 109.84 220.38 109.04 223.84 111.82 228.29 112.31 233.24 116.76 236.71 116.76 230.27 114.29 220.38ZM24.53 350.53 25.72 353.3 27.9 352.02 26.71 349.54ZM19.29 348.36 19.78 350.33 21.56 350.04 21.27 348.06Z"/><path fill="#ededed" d="M256.29 72.07 256.29 73.55 250.36 75.53 249.86 78.5 252.33 82.46 258.27 81.47 261.24 82.46 266.19 87.41 269.16 96.31 267.18 101.76 272.13 103.24 270.15 107.2 273.12 109.18 267.18 117.1 265.69 123.03 267.18 126.99 266.19 129.96 267.18 133.92 271.14 139.86 275.1 140.85 275.59 143.82 277.57 145.79 279.55 144.81 283.01 135.9 287.96 129.96 293.9 126.99 298.85 124.02 302.81 119.08 305.77 119.57 311.71 119.08 316.66 115.12 321.61 113.14 323.09 110.17 321.61 107.2 316.66 104.23 315.18 100.77 317.65 98.79 321.11 100.77 319.63 102.25 323.09 105.22 323.59 101.26 326.56 98.79 323.59 97.3 327.55 92.36 331.01 86.91 329.52 83.45 326.56 82.46 327.55 79.49 331.5 77.51 340.41 69.1 337.44 66.82 329.52 67.62 323.59 72.07 326.06 66.13 322.6 65.14 320.62 68.11 317.65 66.63 310.72 66.63 315.67 64.15 324.08 62.67 320.62 58.71 309.73 56.53 303.79 57.22 302.31 59.7 298.85 59.2 297.36 56.53 293.9 56.73 292.41 58.71 295.38 60.69 292.41 63.66 287.96 59.7 284.5 59.2 282.52 62.67 279.05 61.18 275.1 58.21 269.16 58.21 266.19 61.68 260.25 62.67 258.27 66.63 252.33 67.12 249.37 68.61 252.33 72.07ZM267.18 110.66 268.66 109.18 267.18 106.71 265.2 107.69 265.4 109.67Z"/><path fill="none" d="M152.88 258.97 153.87 254.52 157.83 253.53 159.81 258.97M157.34 265.4 160.31 259.96 167.23 259.17M163.77 269.86 166.24 264.91 171.69 265.9M165.25 274.81 170.7 275.3M170.2 279.26 171.69 275.79 176.14 277.28M175.15 306.47 180.1 299.05M196.42 272.83 194.94 277.77 203.84 283.71 204.34 292.62 202.85 295.09M218.69 280.74 221.66 284.7 219.68 288.66M225.62 283.71 227.1 288.66 228.58 294.6M232.54 284.7 233.53 293.11M236.5 286.68 238.48 291.63M196.92 249.57 197.41 254.02M349.81 214.93 351.3 223.35 343.38 225.32 341.4 229.28 335.46 231.76 334.47 238.19 327.55 239.18 325.57 246.11 323.59 249.57 315.18 250.06M335.46 231.76 361.19 254.52 363.17 255.01 379.5 243.14M334.47 238.19 339.42 241.16 341.89 263.42 327.55 263.42 320.62 259.96 316.66 264.91M363.17 255.01 362.18 262.93 356.24 263.92 352.29 263.92M370.1 211.47 369.11 219.39 373.07 226.31 375.05 224.33 377.03 220.38 379.5 219.39M373.07 226.31 375.05 237.2 379.5 241.16M320.62 259.96 327.55 268.87 331.5 270.85 334.47 270.85 342.19 274.31M316.66 269.86 327.55 270.35M320.62 275.79 327.55 272.83 334.47 274.81 334.47 278.76 336.45 289.65M325.57 281.73 327.55 275.79 331.5 277.77 336.45 284.7M346.35 273.82 345.36 278.76 346.35 284.7 347.34 286.68M353.28 272.83 353.77 283.71M356.24 272.33 357.23 283.71M359.71 280.74 359.21 274.81 357.23 269.86M425.51 214.44 430.46 210.48 438.38 209.49 443.32 207.51 444.31 204.54 442.33 200.58 438.38 198.61 434.42 198.61M444.31 204.54 447.28 210.48 446.29 216.42 452.23 223.35 455.2 227.3M460.64 208.5 468.06 205.53 477.96 209.49 479.94 220.38 482.91 225.32 485.88 229.28M438.38 209.49 439.37 216.42 432.44 221.37 426.5 229.28M432.44 221.37 447.28 229.28 452.23 230.27 454.71 230.27M425.51 222.36 432.44 221.37M446.29 260.95 448.27 256.99 453.22 259.96 457.18 255.51 466.09 253.03 471.03 245.12 472.02 240.17M466.09 253.03 468.06 258.48 470.04 258.48M477.96 209.49 484.89 210.48 488.85 205.53 497.75 204.54 503.69 206.52M479.94 220.38 487.86 224.33 493.79 226.81M463.12 187.72 465.1 185.25 472.02 185.74 477.96 188.71 485.88 194.15 492.81 191.68 495.77 189.2 502.7 187.72 515.07 187.72M463.12 187.72 465.1 195.64 474 192.67 477.96 195.64 488.85 205.53M492.81 191.68 490.83 199.59 497.75 201.57 503.2 198.61M495.77 195.64 502.7 193.66 512.6 194.15M522.49 224.33 527.44 222.85 540.31 227.3M558.12 225.32 560.1 229.28 561.58 234.23M564.06 236.21 562.08 245.12 565.05 259.96M550.7 240.66 553.17 247.1M407.2 247.1 405.72 253.03 387.41 245.12 378.51 245.12M387.41 245.12 388.4 252.04 384.94 259.96 384.44 267.88 381.97 267.88M405.72 253.03 405.22 261.94 401.76 265.9 403.74 272.83 407.7 277.77 413.64 286.68 421.55 288.66 428.48 287.67 430.46 284.7 438.38 289.65 443.32 289.65 450.25 288.66 458.17 279.75 448.27 271.84M427 247.59 434.42 256 433.43 263.92 430.46 270.85 426.5 278.76 430.46 284.7M434.42 256 438.38 259.96 446.29 268.37M403.74 272.83 393.84 279.75 385.93 284.7 382.96 274.81M385.93 284.7 388.9 289.65 394.83 288.66 413.64 286.68M394.83 288.66 393.84 297.57 388.9 301.52 387.91 306.47M421.55 288.66 422.54 293.61 418.58 299.55 417.59 306.47M428.48 287.67 430.46 293.61 428.48 299.55 422.54 293.61M443.32 289.65 443.82 299.55 448.27 301.52M430.46 293.61 443.32 299.55 442.33 306.47M398.79 172.88 401.76 169.91 411.66 167.93 418.58 166.94M397.31 176.34 404.73 179.8 411.66 180.79 417.59 187.72M391.37 177.33 392.85 183.76 398.79 186.73 408.69 194.65M385.93 174.36 384.94 180.79 392.85 183.76M384.94 180.79 378.51 182.77M384.94 191.68 390.88 189.7 398.79 186.73M393.84 199.59 398.79 195.64 403.74 200.09M398.79 195.64 408.69 194.65M434.42 198.61 442.33 200.58 450.25 196.63M613.04 183.76 616.5 183.27M574.94 243.63 570.98 247.1 572.96 253.03 578.9 256 575.93 261.94 576.92 266.39M578.9 256 581.86 253.53M575.93 261.94 581.86 259.96 586.32 267.38M596.21 297.07 606.61 292.62 608.58 287.18 611.55 286.68M201.37 323.81 204.34 331.73 202.85 340.64 200.88 343.61M202.85 340.64 208.3 355.48 206.81 359.44 204.83 373.29 208.3 384.18 206.81 393.09 212.75 414.86 212.75 429.7 216.71 434.15 221.16 433.66M208.3 355.48 211.27 352.02 218.69 351.52 220.67 346.57 228.09 346.08M218.69 351.52 221.66 355.48 227.59 356.47 230.07 359.93 229.57 364.39 234.52 363.89 239.47 361.42M234.52 371.31 232.05 373.29 232.54 381.21 234.03 384.18M222.15 435.14 223.14 443.06M395.33 365.87 395.82 348.55 398.79 340.14 407.7 339.65 415.62 349.05 416.61 349.54M378.51 336.68 393.84 337.17 398.79 340.14M400.28 334.2 401.27 325.3 404.73 323.32 418.58 329.26 425.51 329.75M400.28 334.2 412.65 338.66 418.58 333.21 425.51 329.75M400.28 334.2 398.79 340.14M418.58 333.21 424.52 336.68 423.53 345.58 420.56 350.53M426.5 320.84 429.47 328.76 432.93 333.71 428.48 337.67M430.46 324.31 442.33 322.33M380.48 311.94 388.9 312.43 391.86 316.39 399.78 314.91 401.27 325.3M416.61 305.51 418.58 315.9 414.63 320.84 418.58 326.78 418.58 329.26M418.58 315.9 426.5 320.84 425.51 329.75M373.42 148.18 376.13 144.8 376.13 133.29 378.84 125.16 382.23 118.39 388.32 115.01 392.38 115.69 394.41 119.75 394.41 126.18M392.38 115.69 395.77 112.3 398.48 110.95 400.51 111.62 402.54 112.3M398.48 151.91 403.89 150.89M395.77 155.63 399.83 154.95 403.21 158.34 405.92 155.63M392.38 163.08 397.12 161.05 403.21 158.34M403.21 158.34 403.89 164.43 398.14 167.14M403.89 164.43 413.37 166.46M361.92 168.92 365.67 172.67 367.33 177.67M364.83 166 368.17 170.17 367.33 177.67M367.33 177.67 372.33 182.67 368.17 186.42M372.33 182.67 379 181 381.5 176.83M372.33 182.67 377.33 186"/><path fill="#f8d89f" d="M242.44 56.93 235.51 60.49 231.06 59.2 227.1 63.16 230.07 65.14 229.57 69.1 226.61 68.11 223.14 66.13 219.18 68.61 219.68 70.09 231.55 74.54 234.52 74.05 235.51 71.08 243.43 68.11 241.45 62.67 248.38 64.65 258.27 60.19 256.29 59.2 265.69 56.24 244.91 49.11 240.46 51.78 236.5 48.32 234.03 47.82 232.54 49.31 229.57 48.02 225.62 49.31 228.58 51.78 232.05 52.28 231.55 54.75 233.53 57.22 241.45 55.74ZM246.89 174.36 248.38 170.9 247.39 168.42 238.98 176.34 240.46 178.32 249.56 181.58 251.35 179.31 250.85 175.65ZM232.54 106.21 233.04 109.18 230.56 115.61 225.62 118.58 221.66 117.1 219.18 119.08 220.17 122.54 223.64 122.04 226.61 122.54 230.07 129.96 237.49 133.92 242.93 126.99 238.98 120.56 240.46 118.58 244.42 123.03 250.85 117.59 249.86 115.12 245.41 116.11 242.44 108.19 244.91 102.25 239.47 96.31 235.51 98.29 232.54 92.36 226.61 92.85 226.11 90.38 224.63 84.93 219.18 87.41 218.69 92.36 216.71 92.85 215.72 89.39 220.17 82.46 212.26 83.45 209.29 87.9 210.28 91.37 210.28 96.31 217.7 96.31 223.64 100.27 228.58 105.72ZM108.35 135.9 109.84 142.83 109.34 149.75 114.29 154.7 115.77 157.67 116.27 161.63 140.97 161.63 171.19 166.94 177.13 171.39 185.05 173.37 188.51 176.48 188.51 186.61 186.53 190.39 188.51 190.92 188.51 191.88 205.82 183.46 216.21 181.78 217.2 178.81 220.67 178.62 220.87 183.27 223.14 183.27 224.63 185.25 222.65 187.22 223.14 189.5 225.62 189.7 226.61 187.22 233.53 185.54 235.31 181.29 232.54 183.96 228.09 183.27 229.08 177.33 228.58 173.37 225.84 173.71 225.8 173.45 237.49 171.39 244.42 167.14 248.87 165.45 248.87 160.51 248.12 160.51 240.95 149.75 239.47 138.87 232.05 143.82 229.57 140.85 230.56 137.88 229.57 134.91 226.11 130.46 218.69 128.48 212.75 139.86 211.76 145.79 210.28 151.73 204.83 152.23 203.96 160.51 199.6 160.51 201.37 150.74 194.94 147.77 189.5 144.01 189.5 142.83 181.58 134.91 189.5 125.01 189.5 123.14 192.96 120.06 200.88 118.09 201.86 116.11 207.31 111.16 213.74 113.14 217.7 110.17 219.18 102.25 215.22 98.29 210.28 105.72 207.31 104.73 208.79 101.26 207.31 99.78 203.84 102.25 203.35 89.39 201.37 87.41 196.92 90.38 198.4 94.33 196.42 99.28 193.22 103.4 195.93 96.81 194.44 94.33 190.98 95.32 188.77 101.51 182.08 99.28 177.13 95.32 173.67 96.81 173.17 100.77 171.69 100.77 170.7 97.3 161.3 94.33 162.29 89.39 152.39 80.48 149.42 79.99 148.93 82.46 146.95 81.96 145.46 76.03 139.52 77.51 132.6 76.52 128.64 79 125.18 77.51 122.7 71.57 101.42 109.18 103.9 114.13 109.34 115.12 111.82 129.96 108.85 132.93ZM233.04 89.39 229.57 85.92 227.1 86.91 228.09 89.39ZM228.09 81.96 231.06 79 226.61 75.53 219.68 76.52 215.72 74.54 214.73 69.1 209.78 64.65 207.31 65.64 207.31 67.62 210.28 70.58 210.28 74.54 212.75 77.51ZM223.64 62.67 227.1 59.7 221.66 52.28 219.18 48.32 213.74 51.78 213.74 54.75 217.7 55.74 218.69 57.22 215.72 58.71 218.69 61.68ZM203.84 119.08 203.84 122.54 209.29 121.05 212.75 123.53 214.73 121.55 207.31 114.13ZM209.29 58.71 209.78 62.17 213.74 59.2 211.27 56.24 208.3 56.24ZM202.85 84.44 209.78 83.45 212.75 80.48 205.82 78.3 202.36 80.98ZM208.79 74.54 206.32 72.56 204.34 73.06 206.81 75.33ZM200.88 52.57 198.4 55.74 198.9 57.22 202.85 56.93 205.82 59.7 206.81 57.22 203.84 53.27ZM197.41 68.11 199.89 69.59 200.38 72.56 202.85 72.07 204.34 67.12 201.37 65.83ZM173.17 72.07 163.28 76.52 163.77 80.48 169.21 83.45 168.22 85.92 163.28 83.45 162.29 84.44 165.25 88.4 166.24 91.86 180.1 92.36 183.07 95.32 188.02 92.36 190.49 90.38 192.77 83.07 192.96 83.45 193.45 87.61 197.91 85.92 198.4 82.46 200.38 78.3 195.93 76.52 194.94 79 190.98 79.49 192.38 82.29 186.04 80.48 183.07 75.04 180.1 77.51ZM191.97 65.64 189.64 65.34 189 63.66 184.06 64.65 182.08 60.69 178.12 58.71 173.17 60.69 178.61 65.14 180.1 68.61 188.01 67.85 188.01 69.59 190.98 68.61ZM187.52 51.98 189 52.28 191.47 51.29 187.52 50.79ZM189.49 55.74 190.48 53.96 187.52 54.26 187.52 55.74ZM175.15 51.29 166.24 53.76 165.75 55.74 172.18 58.21 174.66 55.25 177.13 57.22 180.1 53.56ZM166.24 66.13 162.29 62.17 158.33 62.67 152.39 72.56 153.87 77.31 157.34 76.03 161.3 72.07 172.68 69.1 169.21 65.14ZM110.83 156.68 114.29 158.16 113.79 155.69 107.86 150.25ZM102.91 138.87 103.4 142.83 104.89 143.82 104.39 138.87 105.88 135.4 104.39 134.41Z"/><path fill="#f8d89f" d="M403.74 147.77 404.24 152.72 412.65 161.63 413.86 161.63 414.63 165.45 418.58 166.94 422.54 172.38 430.95 174.36 430.46 180.79 428.48 182.28 426.17 185.25 425.51 186.73 425.51 189.7 434.42 192.17 442.33 193.66 450.25 196.63 448.27 193.66 445.8 185.74 446.29 181.78 447.99 181.5 448.27 180.79 443.32 176.83 444.31 171.39 448.27 168.42 454.21 167.73 457.18 170.4 466.09 170.4 469.55 167.43 467.59 160.59 468.06 159.65 481.92 153.22 491.82 156.68 495.28 154.7 501.71 161.63 505.49 161.63 507.65 162.98 510.67 163.17 510.67 164.33 524 167.67 533.29 161.63 534.64 161.63 537.34 162.98 538.96 161.63 539.32 161.63 542.29 158.16 547.23 159.65 550.46 159.65 554 160.67 564.96 159.65 569.5 159.65 569.5 159.23 577.33 158.5 587.33 166.83 594 164.33 594 151 583.18 151 581.37 146.29 583.35 143.82 590.77 143.82 597.7 151.24 606.61 158.16 611.55 157.67 615.02 154.21 615.46 160.93 615.02 164.96 612.54 166.94 613.53 171.89 615.02 174.36 618.48 174.85 622.44 173.37 624.42 166.94 625.64 161.63 625.9 161.63 625.9 150.74 621.45 140.35 615.51 133.92 613.53 133.92 612.54 135.4 606.61 133.42 609.08 126.5 611.06 113.63 627.88 108.19 629.37 110.66 635.3 107.2 634.81 104.73 631.54 104.23 633.82 95.32 637.28 91.86 638.77 95.82 641.24 96.81 643.72 92.85 643.22 87.41 646.68 87.41 646.19 97.3 640.75 111.16 641.24 120.06 652.13 135.4 653.91 135.4 654.3 122.54 656.58 120.56 654.6 116.11 655.89 113.14 652.13 108.68 649.36 107.69 648.96 98.79 654.3 97.5 656.09 94.33 660.04 94.33 663.01 85.92 667.96 79 671.72 78.5 671.42 76.03 666.97 75.04 662.02 70.58 664 67.12 662.52 61.68 663.51 60.69 666.48 63.16 672.91 65.64 678.85 65.64 679.34 62.67 676.37 59.2 679.64 54.26 671.42 51.29 668.95 55.25 666.97 52.28 651.14 46.83 636.29 49.31 634.31 51.29 636.79 53.56 636.79 56.73 631.35 54.75 618.48 59.2 616.5 55.05 608.09 55.05 604.13 59.2 589.78 56.24 577.91 59.2 576.13 62.67 577.41 65.83 569.5 67.86 569.5 67.12 566.04 67.81 565.05 71.08 555.15 69.59 557.13 64.45 546.44 64.45 546.24 69.4 543.77 70.58 540.31 68.41 527.44 70.09 523.84 72.06 528.63 65.64 528.43 59.7 521.5 57.92 513.09 60.19 509.63 57.52 507.15 59.7 507.65 63.66 493.79 71.57 486.87 77.02 481.92 84.44 481.92 88.4 487.36 90.38 484.89 92.85 478.46 90.67 474.99 92.36 471.03 88.89 474.5 102.25 475.49 105.22 479.94 103.74 480.93 105.72 476.97 107.2 476.48 116.11 470.54 116.3 470.04 115.12 474.2 110.17 474 105.22 471.03 100.27 468.86 92.16 462.92 91.56 462.62 96.31 460.94 98.29 461.63 103.24 465.1 106.21 466.09 110.17 463.12 107.69 453.22 106.41 451.74 109.18 444.31 112.15 442.33 110.66 432.93 115.61 432.44 118.88 429.67 119.57 429.96 114.92 426.5 113.14 424.03 114.13 427 122.54 423.53 122.04 420.56 124.52 422.05 127.49 416.11 128.48 417.1 131.15 414.63 130.95 412.15 128.97 410.67 124.52 407.7 122.04 419.57 123.53 421.55 120.56 420.07 117.59 407.7 112.64 402.26 114.13 403.74 118.09 405.22 125.01 408.69 134.91 405.22 142.83 405.72 145.79ZM669.45 118.09 669.74 117.1 666.97 116.11ZM665.49 117.59 664.5 115.61 662.52 115.12 663.51 116.6ZM655.59 138.87 655.1 137.38 653.61 138.37 654.11 140.35ZM653.91 145.79 654.11 142.33 652.33 142.33 652.62 145.3ZM645.69 39.41 647.67 41.89 652.13 39.91 652.13 37.73 648.66 37.14ZM649.65 155.69 650.35 158.16 651.63 154.7ZM646.68 159.65 647.11 160.51 646.19 160.51 645.2 163.47 647.58 161.44 647.67 161.63 647.76 161.28 648.66 160.51 647.95 160.51 648.17 159.65ZM637.28 157.67 631.35 151.24 633.82 146.29 621.94 130.46 622.44 134.91 627.88 144.81 629.37 151.24 633.82 159.15 636.29 160.14ZM582.85 44.85 586.81 44.85 589.98 42.88 588.79 40.4 581.86 42.88ZM582.36 54.26 578.9 52.28 576.42 55.25 579.89 55.54ZM571.97 52.28 572.96 49.31 575.93 48.32 575.43 45.84 578.4 46.34 579.89 43.86 576.92 41.39 569.42 45.36 565.05 45.84 566.04 49.31 568.51 51.42 568.51 52.28ZM502.7 50.79 503.69 54.75 505.18 57.52 507.15 55.74 510.12 54.26 508.64 51.29ZM492.31 54.26 492.81 55.74 498.74 55.74 501.22 53.27 499.24 49.31 494.78 51.29ZM486.37 51.29 487.36 52.57 490.83 52.28 494.29 48.81 491.32 47.63ZM454.71 78.5 444.81 81.47 439.37 92.36 444.31 93.84 447.28 86.42 458.17 79.49 458.17 76.52 455.69 75.53ZM445.11 64.15 446.29 64.84 447.78 62.67 446.79 60.69 444.31 61.68ZM442.83 100.27 441.35 95.32 438.38 95.32 437.39 98.79 435.9 100.27 440.36 103.24 444.31 105.02 445.8 102.75ZM442.83 65.64 443.32 63.66 439.56 63.16 440.16 65.14ZM435.41 66.13 436.6 63.66 431.45 63.16 432.44 65.64ZM421.55 67.62 422.05 70.09 425.02 70.78 427 69.59 427.69 65.44 425.02 65.64ZM395.77 154.62 393.74 152.92 391.03 155.63 393.06 156.99Z"/><path fill="#f8d89f" d="M247.39 300.53 242.93 298.56 242.44 290.64 240.46 289.65 236.5 293.11 231.55 293.61 223.14 296.58 220.67 294.1 219.68 288.66 215.72 291.63 211.76 290.64 212.75 293.61 211.27 297.57 202.85 295.09 200.68 297.07 200.85 305.51 199.89 305.51 198.9 309.96 192.46 313.92 191.97 317.88 195.43 321.83 198.9 321.34 201.37 323.81 207.8 321.83 210.28 322.33 212.26 327.28 221.66 331.73 223.14 335.19 227.59 337.67 228.58 341.63 229.57 351.03 233.53 351.52 237.49 355.48 237.99 359.93 239.96 361.42 234.52 371.31 244.91 376.76 249.86 367.36 249.86 359.44 258.77 354 264.21 353.5 268.17 346.57 268.96 334.7 267.67 330.25 276.88 321.34 277.08 311.44 265.69 305.51 263.28 305.51 258.27 303.5Z"/><path fill="#f8d89f" d="M507.65 214.44 510.62 220.38 506.66 229.28 501.22 231.76 505.18 235.22 504.68 239.18 500.23 240.17 503.2 241.65 501.71 245.12 504.68 248.09 507.65 247.1 509.63 244.62 510.62 253.03 517.55 266.89 522.49 278.76 526.45 276.78 527.94 270.85 528.43 259.47 536.35 251.05 541.3 245.12 542.78 239.18 541.3 232.25 543.28 231.76 540.31 230.27 527.44 227.3 522.49 224.33 519.52 220.38 518.04 214.93 513.59 211.47 506.66 211.96ZM547.23 234.73 549.21 237.2 550.7 240.66 552.18 239.18 554.16 230.27 558.12 225.32 557.13 222.36 553.17 222.85 547.23 226.81 542.29 229.28 543.28 231.76Z"/><path fill="#f8d89f" d="M487.86 237.2 494.78 237.2 500.23 240.17 504.68 239.18 505.18 235.22 501.22 231.76 506.66 229.28 510.62 220.38 507.65 214.44 506.66 211.96 513.59 211.47 511.61 208.5 507.65 204.54 503.69 206.52 501.71 211.47 502.21 216.42 498.74 224.33 493.79 226.81 485.88 229.28 486.87 232.25 484.39 236.71Z"/><path fill="#f8d89f" d="M372.57 199.59 372.57 196.13 370.59 197.12 371.09 200.09ZM351.3 186.24 350.31 194.15 351.3 195.14 357.23 196.13 360.2 193.16 365.15 195.14 368.12 193.66 367.13 188.71 365.15 185.74 367.13 182.28 367.62 179.31 366.14 177.33 361.19 174.85 359.21 172.38 356.24 175.84 351.3 177.33 349.32 178.81 344.37 180.79Z"/><path fill="#f8d89f" d="M360.2 203.55 357.73 204.05 358.42 205.53 360.4 205.33ZM338.43 206.52 338.93 211.47 343.38 212.95 349.32 211.47 352.78 207.51 353.28 203.55 358.72 199.1 357.23 196.13 350.31 194.15 341.4 194.15 336.45 193.66 335.96 199.1 339.42 199.59ZM323.39 233.74 323.78 231.76 322.1 232.45ZM317.45 232.75 317.85 234.23 319.13 234.43 319.43 232.45ZM315.67 231.26 313.89 231.46 314.48 233.44 315.87 233.24Z"/><path fill="#f8d89f" d="M373.27 190.49 375.54 192.67 376.53 197.62 378.51 199.26 378.51 200.09 382.96 204.54 385.43 208.5 386.92 207.51 385.43 203.55 387.91 204.54 389.39 202.07 381.97 197.62 379.5 195.5 379.5 187.22 376.04 185.25 371.58 187.72 368.12 189.2 368.32 192.67 370.59 191.88ZM383.45 208.3 378.51 208.5 378.51 210.48 382.96 211.47ZM373.07 201.08 370.1 201.57 370.59 206.03 372.87 206.03Z"/><path fill="#f8d89f" d="M385.93 174.36 391.37 177.33 397.31 176.34 398.79 172.88 398.04 168.34 398.14 167.14 397.12 163.42 396.4 163.39 396.32 163.18 388.66 162.23 388.32 161.39 381.21 163.76 380.87 171.2 382.32 171.2Z"/><path fill="#f8d89f" d="M407.2 247.1 427 247.59 428.48 245.12 428.48 242.15 421.55 231.76 421.06 228.29 423.04 231.26 425.51 232.25 424.03 227.3 422.54 224.33 417.1 223.15 413.64 224.83 406.71 224.33Z"/><path fill="#f8d89f" d="M378.51 268.44 372.08 268.87 365.15 267.38 361.69 270.85 362.18 275.79 359.71 280.74 363.17 283.71 367.13 287.67 372.08 287.18 373.07 283.71 379.5 282.72 379.5 279.8 382.96 274.81 383.95 269.86 381.97 267.88Z"/><path fill="#f8d89f" d="M344.37 275.3 346.35 273.82 351.3 272.83 356.24 272.33 357.23 269.86 355.25 265.9 352.29 263.92 349.32 265.9 343.38 270.35 342.19 274.31Z"/><path fill="#f8d89f" d="M388.9 369.33 391.86 373.79 390.08 375.77 391.37 379.23 394.83 380.72 397.31 378.74 406.71 378.24 411.66 376.26 423.53 364.88 423.53 358.45 421.55 356.47 420.56 350.53 416.61 349.54 411.66 353.01 408.69 357.95 404.73 357.46 397.31 360.92 396.32 356.47 395.33 365.87 387.11 364.39Z"/><path fill="#f8d89f" d="M663.8 305.51 662.55 305.51 658.06 302.51 654.33 305.51 650.15 305.51 650.64 309.96 654.11 313.42 658.56 316.89 659.05 322.33 661.53 325.3 663.8 324.8 663.8 306.47 664 306.47 663.8 306.34ZM643.22 300.53 644.21 306.47 645.63 306.47 647.18 309.96 648.17 305.51 646.86 305.51 646.19 303.5 649.16 302.51 648.17 299.05ZM635.38 305.8 634.31 306.47 636.67 306.47 637.28 306.79 637.68 306.47 640.25 306.47 638.27 304 635.67 305.63 634.81 305.51ZM635.3 298.56 636.79 295.59 634.31 292.12 633.32 294.6ZM616.5 308.97 615.51 312.43 618.48 312.93 620.46 308.97 622.44 312.93 624.42 309.46 623.92 305.51 621.96 305.51 620.46 302.51 622.44 302.02 625.41 299.05 620.46 299.55 622.44 297.57 627.39 296.58 630.36 294.6 629.37 293.11 624.42 294.6 619.47 294.1 617.49 296.58 615.71 305.51 615.02 305.51ZM619.96 322.63 621.94 320.84 616.01 321.34 617 322.63ZM615.02 325.59 617.49 325.79 616.5 323.81 614.03 324.01ZM608.09 307.98 608.39 306.47 610.56 306.47 611.55 299.55 614.52 295.59 612.54 291.63 611.55 286.68 615.51 283.71 612.54 281.24 610.07 278.76 608.09 282.23 605.62 285.69 598.69 289.65 597.7 293.11 593.25 294.6 595.72 306.47 603.12 306.47 605.62 308.97ZM612.54 321.64 614.52 321.34 614.03 319.66 611.55 319.85ZM610.07 322.33 609.57 320.65 607.1 321.04 608.09 322.33ZM598.69 316.39 586.81 313.92 584.34 315.4 585.33 316.69 596.71 320.84 603.14 321.83 605.62 320.35ZM574.94 306.47 577.56 306.47 580.88 311.44 584.83 311.44 587.31 305.51 585.85 305.51 584.83 304.49 581.86 299.55 569.5 289.01 569.5 288.66 565.05 283.71 562.08 282.23 564.06 286.68 567.03 291.63 568.51 292.52 568.51 299.55Z"/><path fill="#f8d89f" d="M571.97 284.7 578.9 293.61 581.86 294.6 579.89 288.66 576.92 283.71 570.98 281.24Z"/><path fill="#f8d89f" d="M574.94 243.63 578.9 248.09 581.86 253.53 586.81 258.48 586.32 267.38 581.37 270.85 580.88 273.82 583.35 275.3 585.33 272.33 590.28 267.88 590.97 262.93 588.79 257.49 582.85 250.56 580.88 246.11 583.35 242.64 580.88 239.18 577.91 237.2 573.45 239.67Z"/><path fill="#f9cf87" d="M512.1 182.28 515.07 187.72 512.6 194.15 503.2 198.61 507.65 204.54 511.61 208.5 518.04 214.44 519.52 220.38 533.38 224.33 540.31 227.3 547.23 226.81 553.17 222.85 557.13 222.36 562.57 229.28 561.58 234.23 564.06 236.21 566.04 240.17 568.51 240.87 568.51 241.16 569.5 241.16 569.5 240.87 574.94 237.69 577.91 237.2 580.88 239.18 583.84 241.65 587.8 241.16 590.28 243.14 591.76 241.65 600.67 238.19 604.63 234.23 608.09 228.29 610.07 221.37 609.77 216.42 607.1 214.93 608.09 213.45 608.58 209.49 600.67 202.56 601.16 198.61 604.13 195.14 604.63 193.16 599.68 192.67 598.69 195.14 595.72 193.66 593.25 190.69 597.7 184.26 599.68 184.75 600.67 188.71 605.62 184.75 608.09 181.29 611.55 177.33 615.02 174.36 613.53 171.89 612.54 166.94 615.02 164.96 615.39 161.63 615.51 161.63 615.02 154.21 611.55 157.67 606.61 158.16 597.7 151.24 590.77 143.82 583.35 143.82 581.37 146.29 583.84 152.72 578.4 158.16 578.74 160.51 578.4 160.51 578.77 160.77 578.9 161.63 579.97 161.63 581.86 162.98 587.31 164.96 583.84 166.44 580.88 171.89 574.94 178.81 568.51 182.79 565.03 184.07 560.1 184.95 555.15 183.56 549.21 184.75 546.41 183.73 542.33 180.17 533.36 177.02 524.83 168.5 524.6 168.69 523.48 167.43 520.1 172.5 516.34 175.68 514.08 177.33ZM591.27 245.12 588.79 246.6 590.28 249.87 592.75 248.58 593.74 246.11Z"/><path fill="#fdaa1e" d="M110.31 161.75 100.93 184.26 103.11 203.06 106.08 204.05 106.87 209.49 113.79 209.49 119.24 213.94 132.1 215.23 134.08 221.86 138.53 220.18 141.5 229.28 144.47 231.76 148.43 226.31 156.84 220.87 161.3 223.35 166.24 223.84 166.74 221.37 176.63 220.87 178.32 224.33 178.61 229.28 177.13 230.77 178.61 235.22 181.58 235.72 184.06 231.26 182.57 225.32 183.56 220.38 189.5 214.93 189.5 213.59 191.97 211.47 197.91 209.99 197.41 204.05 205.33 195.14 213.74 193.66 212.75 189.7 217.7 186.24 220.87 183.27 220.67 178.62 217.2 178.81 216.21 181.78 205.82 183.46 189.5 191.39 189.5 191.18 186.53 190.39 189.99 183.76 189.99 177.82 185.05 173.37 177.13 171.39 171.19 166.94 134.58 160.51 131.22 160.51 115.77 158.07 114.29 158.16 110.83 159.15ZM208 255.01 211.27 255.01 210.97 253.23 207.8 253.53ZM66.1 71.28 67.28 78.5 74.41 80.48 74.71 81.96 64.31 85.23 58.38 95.32 60.36 105.22 63.82 107.99 67.28 106.21 65.3 109.18 58.38 113.14 43.04 118.58 43.04 121.55 69.76 113.93 77.18 105.22 84.11 100.77 80.64 106.71 85.1 107.69 92.02 105.02 94 109.67 98.95 110.17 104.39 116.11 104.1 121.55 105.38 124.52 106.37 118.09 107.86 119.08 108.85 132.93 111.82 129.96 109.34 115.12 103.9 114.13 101.42 109.18 122.7 71.57 101.42 55.05 77.18 59.9 76.39 66.63 80.94 70.09 79.65 74.54 72.73 69.79ZM57.39 81.47 58.38 79.49 53.92 76.03ZM40.07 121.55 38.09 120.56 39.08 123.03ZM33.44 125.01 36.8 123.03 36.61 121.55 32.84 123.53ZM21.96 124.02 19.29 123.83 19.78 126ZM16.62 237.69 16.62 242.35 19.29 242.64 20.97 240.17 18.79 237.4ZM17.01 123.53 14.04 123.53 15.63 125.51ZM15.63 235.02 13.65 234.23 14.34 236.71ZM12.36 231.76 10.38 231.46 11.67 233.44ZM7.11 122.24 8.4 123.53 9.39 121.25 7.41 120.56ZM8.9 229.28 7.11 228.29 8.4 230.77ZM2.76 113.34 0.98 112.15 1.18 114.92Z"/><path fill="#ededed" d="M534 176.83 542.33 179.33 549 185.17 560.67 184.67 567.33 183.5 575.67 179.33 580.67 169.33 586.5 165.17 577.33 157.67 554 159.67 544 157.67 540.67 156 530.67 161.83 524 166.83 527.33 172.67ZM422.54 359.93 421.06 356.96 418.58 357.95 418.58 360.43 420.56 361.42ZM416.11 365.87 413.14 363.4 409.68 366.37 410.67 369.33 414.13 369.33Z"/></svg>
<div class="b" style="left:10px;top:10px;width:30px;height:21.7px;background:#f8f9fa;border-radius:4px"></div>
<div class="b" style="left:10px;top:40px;width:30px;height:21.7px;background:#f8f9fa;border-radius:4px"></div>
<span class="t" style="left:20.16px;top:12px;font-size:17.6px;color:#000;font-weight:700;">+</span>
<span class="t" style="left:20.16px;top:42px;font-size:17.6px;color:#000;font-weight:700;">−</span>
</div>
</section>
<section class="card" style="left:336px;top:789px;width:776px;height:704px">
<svg class="i" style="left:16px;top:19.5px;" width="15" height="20" viewBox="0 0 384 512" fill="#212529" aria-hidden="true"><path d="M374.6 118.6c12.5-12.5 12.5-32.8 0-45.3s-32.8-12.5-45.3 0l-320 320c-12.5 12.5-12.5 32.8 0 45.3s32.8 12.5 45.3 0l320-320zM128 128A64 64 0 1 0 0 128a64 64 0 1 0 128 0zM384 384a64 64 0 1 0 -128 0 64 64 0 1 0 128 0z"/></svg>
<h2 class="t" style="left:37px;top:20.95px;font-size:19.2px;color:#212529;letter-spacing:0.34px;">Pourcentages - Aujourd'hui</h2>
<svg class="i" style="left:738px;top:19px;" width="20" height="20" viewBox="0 0 512 512" fill="#8e9194" aria-hidden="true"><path d="M142.9 142.9c-17.5 17.5-30.1 38-37.8 59.8c-5.9 16.7-24.2 25.4-40.8 19.5s-25.4-24.2-19.5-40.8C55.6 150.7 73.2 122 97.6 97.6c87.2-87.2 228.3-87.5 315.8-1L455 55c6.9-6.9 17.2-8.9 26.2-5.2s14.8 12.5 14.8 22.2l0 128c0 13.3-10.7 24-24 24l-8.4 0c0 0 0 0 0 0L344 224c-9.7 0-18.5-5.8-22.2-14.8s-1.7-19.3 5.2-26.2l41.1-41.1c-62.6-61.5-163.1-61.2-225.3 1zM16 312c0-13.3 10.7-24 24-24l7.6 0 .7 0L168 288c9.7 0 18.5 5.8 22.2 14.8s1.7 19.3-5.2 26.2l-41.1 41.1c62.6 61.5 163.1 61.2 225.3-1c17.5-17.5 30.1-38 37.8-59.8c5.9-16.7 24.2-25.4 40.8-19.5s25.4 24.2 19.5 40.8c-10.8 30.6-28.4 59.3-52.9 83.8c-87.2 87.2-228.3 87.5-315.8 1L57 457c-6.9 6.9-17.2 8.9-26.2 5.2S16 449.7 16 440l0-119.6 0-.7 0-7.6z"/></svg>
<div class="fc" style="left:16px;top:56px;width:174px;height:38px;"></div>
<span class="t" style="left:29.2px;top:68.6px;font-size:15.36px;color:#212529;letter-spacing:0.12px;">DecSoft Utils</span>
<svg class="i" style="left:161px;top:69.3px" width="16" height="12" viewBox="0 0 16 12"><path d="M3.3 3.5 L8 8.3 L12.7 3.5" fill="none" stroke="#343a40" stroke-width="1.6" stroke-linecap="round" stroke-linejoin="round"/></svg>
<div class="btn" style="left:206px;top:56px;width:173px;height:38px;"></div>
<span class="t" style="left:264.6px;top:68.6px;font-size:15.36px;color:#6c757d;letter-spacing:-0.28px;">Dates</span>
<span class="b" style="left:311.6px;top:73px;width:0;height:0;border-left:4.2px solid transparent;border-right:4.2px solid transparent;border-top:4.6px solid #6c757d"></span>
<div class="fc" style="left:395px;top:56px;width:174px;height:38px;"></div>
<span class="t" style="left:411.3px;top:68.6px;font-size:15.36px;color:#212529;letter-spacing:-0.13px;">10 / 04 / 2025</span>
<svg class="i" style="left:534.8px;top:65.5px" width="17" height="17" viewBox="0 0 17 17"><rect x="1.6" y="2.6" width="13.8" height="12.8" rx="1.6" fill="none" stroke="#4a4a4a" stroke-width="1.25"/><path d="M1.6 3.6 a1 1 0 0 1 1-1 h11.8 a1 1 0 0 1 1 1 v2.2 h-13.8z M4.3 0.6h1.5v2.6H4.3z M11.2 0.6h1.5v2.6h-1.5z" fill="#4a4a4a"/></svg>
<div class="fc" style="left:585px;top:56px;width:173px;height:38px;"></div>
<span class="t" style="left:601.3px;top:68.6px;font-size:15.36px;color:#212529;letter-spacing:-0.13px;">10 / 04 / 2025</span>
<svg class="i" style="left:723.8px;top:65.5px" width="17" height="17" viewBox="0 0 17 17"><rect x="1.6" y="2.6" width="13.8" height="12.8" rx="1.6" fill="none" stroke="#4a4a4a" stroke-width="1.25"/><path d="M1.6 3.6 a1 1 0 0 1 1-1 h11.8 a1 1 0 0 1 1 1 v2.2 h-13.8z M4.3 0.6h1.5v2.6H4.3z M11.2 0.6h1.5v2.6h-1.5z" fill="#4a4a4a"/></svg>
<div class="b" style="left:16px;top:110px;width:742px;height:576px;border:1px solid #dee2e6;border-radius:6px;overflow:hidden;background:#fff">
<div class="b odd" style="left:0px;top:0px;width:740px;height:40px;"></div>
<svg class="i" style="left:17px;top:12.5px;" width="10" height="16" viewBox="0 0 320 512" fill="#000" aria-hidden="true"><path d="M112 48a48 48 0 1 1 96 0 48 48 0 1 1 -96 0zm40 304l0 128c0 17.7-14.3 32-32 32s-32-14.3-32-32l0-223.1L59.4 304.5c-9.1 15.1-28.8 20-43.9 10.9s-20-28.8-10.9-43.9l58.3-97c17.4-28.9 48.6-46.6 82.3-46.6l29.7 0c33.7 0 64.9 17.7 82.3 46.6l58.3 97c9.1 15.1 4.2 34.8-10.9 43.9s-34.8 4.2-43.9-10.9L232 256.9 232 480c0 17.7-14.3 32-32 32s-32-14.3-32-32l0-128-16 0z"/></svg>
<span class="t" style="left:40.7px;top:13.7px;font-size:15.36px;color:#000;letter-spacing:-0.28px;">Personnes</span>
<span class="t" style="left:520.46px;top:13.7px;font-size:15.36px;color:#000;">42</span>
<span class="t" style="left:627.28px;top:13.7px;font-size:15.36px;color:#000;">73,68</span>
<span class="t" style="left:669.62px;top:13.98px;font-size:15.5px;color:#000;font-weight:700;transform:scale(.94,1.2);transform-origin:0 84.65%;">%</span>
<div class="b" style="left:0px;top:41px;width:740px;height:40px;"></div>
<div class="b" style="left:0px;top:40px;width:740px;height:1px;background:#dee2e6"></div>
<svg class="i" style="left:12px;top:53.5px;" width="20" height="16" viewBox="0 0 640 512" fill="#000" aria-hidden="true"><path d="M320 0c17.7 0 32 14.3 32 32l0 64 120 0c39.8 0 72 32.2 72 72l0 272c0 39.8-32.2 72-72 72l-304 0c-39.8 0-72-32.2-72-72l0-272c0-39.8 32.2-72 72-72l120 0 0-64c0-17.7 14.3-32 32-32zM208 384c-8.8 0-16 7.2-16 16s7.2 16 16 16l32 0c8.8 0 16-7.2 16-16s-7.2-16-16-16l-32 0zm96 0c-8.8 0-16 7.2-16 16s7.2 16 16 16l32 0c8.8 0 16-7.2 16-16s-7.2-16-16-16l-32 0zm96 0c-8.8 0-16 7.2-16 16s7.2 16 16 16l32 0c8.8 0 16-7.2 16-16s-7.2-16-16-16l-32 0zM264 256a40 40 0 1 0 -80 0 40 40 0 1 0 80 0zm152 40a40 40 0 1 0 0-80 40 40 0 1 0 0 80zM48 224l16 0 0 192-16 0c-26.5 0-48-21.5-48-48l0-96c0-26.5 21.5-48 48-48zm544 0c26.5 0 48 21.5 48 48l0 96c0 26.5-21.5 48-48 48l-16 0 0-192 16 0z"/></svg>
<span class="t" style="left:40.7px;top:54.7px;font-size:15.36px;color:#000;letter-spacing:0.01px;">Robots</span>
<span class="t" style="left:520.46px;top:54.7px;font-size:15.36px;color:#000;">15</span>
<span class="t" style="left:627.28px;top:54.7px;font-size:15.36px;color:#000;">26,32</span>
<span class="t" style="left:669.62px;top:54.98px;font-size:15.5px;color:#000;font-weight:700;transform:scale(.94,1.2);transform-origin:0 84.65%;">%</span>
<div class="b odd" style="left:0px;top:82px;width:740px;height:40px;"></div>
<div class="b" style="left:0px;top:81px;width:740px;height:1px;background:#dee2e6"></div>
<svg class="i" style="left:14px;top:94.5px;" width="16" height="16" viewBox="0 0 512 512" fill="#000" aria-hidden="true"><path d="M377.9 105.9L500.7 228.7c7.2 7.2 11.3 17.1 11.3 27.3s-4.1 20.1-11.3 27.3L377.9 406.1c-6.4 6.4-15 9.9-24 9.9c-18.7 0-33.9-15.2-33.9-33.9l0-62.1-128 0c-17.7 0-32-14.3-32-32l0-64c0-17.7 14.3-32 32-32l128 0 0-62.1c0-18.7 15.2-33.9 33.9-33.9c9 0 17.6 3.6 24 9.9zM160 96L96 96c-17.7 0-32 14.3-32 32l0 256c0 17.7 14.3 32 32 32l64 0c17.7 0 32 14.3 32 32s-14.3 32-32 32l-64 0c-53 0-96-43-96-96L0 128C0 75 43 32 96 32l64 0c17.7 0 32 14.3 32 32s-14.3 32-32 32z"/></svg>
<span class="t" style="left:40.7px;top:95.7px;font-size:15.36px;color:#000;letter-spacing:0.18px;">Impacts directs</span>
<span class="t" style="left:520.46px;top:95.7px;font-size:15.36px;color:#000;">76</span>
<span class="t" style="left:627.28px;top:95.7px;font-size:15.36px;color:#000;">60,80</span>
<span class="t" style="left:669.62px;top:95.98px;font-size:15.5px;color:#000;font-weight:700;transform:scale(.94,1.2);transform-origin:0 84.65%;">%</span>
<div class="b" style="left:0px;top:123px;width:740px;height:40px;"></div>
<div class="b" style="left:0px;top:122px;width:740px;height:1px;background:#dee2e6"></div>
<svg class="i" style="left:14px;top:135.5px;" width="16" height="16" viewBox="0 0 512 512" fill="#000" aria-hidden="true"><path d="M217.9 105.9L340.7 228.7c7.2 7.2 11.3 17.1 11.3 27.3s-4.1 20.1-11.3 27.3L217.9 406.1c-6.4 6.4-15 9.9-24 9.9c-18.7 0-33.9-15.2-33.9-33.9l0-62.1L32 320c-17.7 0-32-14.3-32-32l0-64c0-17.7 14.3-32 32-32l128 0 0-62.1c0-18.7 15.2-33.9 33.9-33.9c9 0 17.6 3.6 24 9.9zM352 416l64 0c17.7 0 32-14.3 32-32l0-256c0-17.7-14.3-32-32-32l-64 0c-17.7 0-32-14.3-32-32s14.3-32 32-32l64 0c53 0 96 43 96 96l0 256c0 53-43 96-96 96l-64 0c-17.7 0-32-14.3-32-32s14.3-32 32-32z"/></svg>
<span class="t" style="left:40.7px;top:136.7px;font-size:15.36px;color:#000;letter-spacing:0.22px;">Impacts indirects</span>
<span class="t" style="left:520.46px;top:136.7px;font-size:15.36px;color:#000;">49</span>
<span class="t" style="left:627.28px;top:136.7px;font-size:15.36px;color:#000;">39,20</span>
<span class="t" style="left:669.62px;top:136.98px;font-size:15.5px;color:#000;font-weight:700;transform:scale(.94,1.2);transform-origin:0 84.65%;">%</span>
<div class="b odd" style="left:0px;top:164px;width:740px;height:40px;"></div>
<div class="b" style="left:0px;top:163px;width:740px;height:1px;background:#dee2e6"></div>
<svg class="i" style="left:16px;top:176.5px;" width="12" height="16" viewBox="0 0 384 512" fill="#000" aria-hidden="true"><path d="M0 64C0 28.7 28.7 0 64 0L224 0l0 128c0 17.7 14.3 32 32 32l128 0 0 288c0 35.3-28.7 64-64 64L64 512c-35.3 0-64-28.7-64-64L0 64zm384 64l-128 0L256 0 384 128z"/></svg>
<span class="t" style="left:40.7px;top:177.7px;font-size:15.36px;color:#000;letter-spacing:0.2px;">Utilisateurs uniques</span>
<span class="t" style="left:520.46px;top:177.7px;font-size:15.36px;color:#000;">24</span>
<span class="t" style="left:627.28px;top:177.7px;font-size:15.36px;color:#000;">42,11</span>
<span class="t" style="left:669.62px;top:177.98px;font-size:15.5px;color:#000;font-weight:700;transform:scale(.94,1.2);transform-origin:0 84.65%;">%</span>
<div class="b" style="left:0px;top:205px;width:740px;height:40px;"></div>
<div class="b" style="left:0px;top:204px;width:740px;height:1px;background:#dee2e6"></div>
<svg class="i" style="left:13px;top:217.5px;" width="18" height="16" viewBox="0 0 576 512" fill="#000" aria-hidden="true"><path d="M0 64C0 28.7 28.7 0 64 0L224 0l0 128c0 17.7 14.3 32 32 32l128 0 0 38.6C310.1 219.5 256 287.4 256 368c0 59.1 29.1 111.3 73.7 143.3c-3.2 .5-6.4 .7-9.7 .7L64 512c-35.3 0-64-28.7-64-64L0 64zm384 64l-128 0L256 0 384 128zm48 96a144 144 0 1 1 0 288 144 144 0 1 1 0-288zm16 80c0-8.8-7.2-16-16-16s-16 7.2-16 16l0 48-48 0c-8.8 0-16 7.2-16 16s7.2 16 16 16l48 0 0 48c0 8.8 7.2 16 16 16s16-7.2 16-16l0-48 48 0c8.8 0 16-7.2 16-16s-7.2-16-16-16l-48 0 0-48z"/></svg>
<span class="t" style="left:40.7px;top:218.7px;font-size:15.36px;color:#000;letter-spacing:0.16px;">Utilisateurs récurrents</span>
<span class="t" style="left:520.46px;top:218.7px;font-size:15.36px;color:#000;">33</span>
<span class="t" style="left:627.28px;top:218.7px;font-size:15.36px;color:#000;">57,89</span>
<span class="t" style="left:669.62px;top:218.98px;font-size:15.5px;color:#000;font-weight:700;transform:scale(.94,1.2);transform-origin:0 84.65%;">%</span>
<div class="b odd" style="left:0px;top:246px;width:740px;height:40px;"></div>
<div class="b" style="left:0px;top:245px;width:740px;height:1px;background:#dee2e6"></div>
<svg class="i" style="left:13px;top:258.5px;" width="18" height="16" viewBox="0 0 576 512" fill="#000" aria-hidden="true"><path d="M64 0C28.7 0 0 28.7 0 64L0 352c0 35.3 28.7 64 64 64l176 0-10.7 32L160 448c-17.7 0-32 14.3-32 32s14.3 32 32 32l256 0c17.7 0 32-14.3 32-32s-14.3-32-32-32l-69.3 0L336 416l176 0c35.3 0 64-28.7 64-64l0-288c0-35.3-28.7-64-64-64L64 0zM512 64l0 224L64 288 64 64l448 0z"/></svg>
<span class="t" style="left:40.7px;top:259.7px;font-size:15.36px;color:#000;letter-spacing:-0.17px;">Bureau</span>
<span class="t" style="left:520.46px;top:259.7px;font-size:15.36px;color:#000;">37</span>
<span class="t" style="left:627.28px;top:259.7px;font-size:15.36px;color:#000;">64,91</span>
<span class="t" style="left:669.62px;top:259.98px;font-size:15.5px;color:#000;font-weight:700;transform:scale(.94,1.2);transform-origin:0 84.65%;">%</span>
<div class="b" style="left:0px;top:287px;width:740px;height:40px;"></div>
<div class="b" style="left:0px;top:286px;width:740px;height:1px;background:#dee2e6"></div>
<svg class="i" style="left:16px;top:299.5px;" width="12" height="16" viewBox="0 0 384 512" fill="#000" aria-hidden="true"><path d="M16 64C16 28.7 44.7 0 80 0L304 0c35.3 0 64 28.7 64 64l0 384c0 35.3-28.7 64-64 64L80 512c-35.3 0-64-28.7-64-64L16 64zM224 448a32 32 0 1 0 -64 0 32 32 0 1 0 64 0zM304 64L80 64l0 320 224 0 0-320z"/></svg>
<span class="t" style="left:40.7px;top:300.7px;font-size:15.36px;color:#000;letter-spacing:0.69px;">Mobile</span>
<span class="t" style="left:520.46px;top:300.7px;font-size:15.36px;color:#000;">19</span>
<span class="t" style="left:627.28px;top:300.7px;font-size:15.36px;color:#000;">33,33</span>
<span class="t" style="left:669.62px;top:300.98px;font-size:15.5px;color:#000;font-weight:700;transform:scale(.94,1.2);transform-origin:0 84.65%;">%</span>
<div class="b odd" style="left:0px;top:328px;width:740px;height:40px;"></div>
<div class="b" style="left:0px;top:327px;width:740px;height:1px;background:#dee2e6"></div>
<svg class="i" style="left:15px;top:340.5px;" width="14" height="16" viewBox="0 0 448 512" fill="#000" aria-hidden="true"><path d="M0 64C0 28.7 28.7 0 64 0L384 0c35.3 0 64 28.7 64 64l0 384c0 35.3-28.7 64-64 64L64 512c-35.3 0-64-28.7-64-64L0 64zM256 448a32 32 0 1 0 -64 0 32 32 0 1 0 64 0zM384 64L64 64l0 320 320 0 0-320z"/></svg>
<span class="t" style="left:40.7px;top:341.7px;font-size:15.36px;color:#000;letter-spacing:-0.07px;">Tablette</span>
<span class="t" style="left:524.73px;top:341.7px;font-size:15.36px;color:#000;">1</span>
<span class="t" style="left:631.55px;top:341.7px;font-size:15.36px;color:#000;">1,75</span>
<span class="t" style="left:665.35px;top:341.98px;font-size:15.5px;color:#000;font-weight:700;transform:scale(.94,1.2);transform-origin:0 84.65%;">%</span>
<div class="b" style="left:0px;top:369px;width:740px;height:40px;"></div>
<div class="b" style="left:0px;top:368px;width:740px;height:1px;background:#dee2e6"></div>
<svg class="i" style="left:12px;top:381.5px;" width="20" height="16" viewBox="0 0 640 512" fill="#000" aria-hidden="true"><path d="M64 64l0 288 512 0 0-288L64 64zM0 64C0 28.7 28.7 0 64 0L576 0c35.3 0 64 28.7 64 64l0 288c0 35.3-28.7 64-64 64L64 416c-35.3 0-64-28.7-64-64L0 64zM128 448l384 0c17.7 0 32 14.3 32 32s-14.3 32-32 32l-384 0c-17.7 0-32-14.3-32-32s14.3-32 32-32z"/></svg>
<span class="t" style="left:40.7px;top:382.7px;font-size:15.36px;color:#000;letter-spacing:-0.18px;">Télévision</span>
<span class="t" style="left:524.73px;top:382.7px;font-size:15.36px;color:#000;">0</span>
<span class="t" style="left:631.55px;top:382.7px;font-size:15.36px;color:#000;">0,00</span>
<span class="t" style="left:665.35px;top:382.98px;font-size:15.5px;color:#000;font-weight:700;transform:scale(.94,1.2);transform-origin:0 84.65%;">%</span>
<div class="b odd" style="left:0px;top:410px;width:740px;height:40px;"></div>
<div class="b" style="left:0px;top:409px;width:740px;height:1px;background:#dee2e6"></div>
<svg class="i" style="left:14px;top:422.5px;" width="16" height="16" viewBox="0 0 512 512" fill="#000" aria-hidden="true"><path d="M256 0a256 256 0 1 1 0 512A256 256 0 1 1 256 0zM232 120l0 136c0 8 4 15.5 10.7 20l96 64c11 7.4 25.9 4.4 33.3-6.7s4.4-25.9-6.7-33.3L280 243.2 280 120c0-13.3-10.7-24-24-24s-24 10.7-24 24z"/></svg>
<span class="t" style="left:40.7px;top:423.7px;font-size:15.36px;color:#000;letter-spacing:0.1px;">Portable</span>
<span class="t" style="left:524.73px;top:423.7px;font-size:15.36px;color:#000;">0</span>
<span class="t" style="left:631.55px;top:423.7px;font-size:15.36px;color:#000;">0,00</span>
<span class="t" style="left:665.35px;top:423.98px;font-size:15.5px;color:#000;font-weight:700;transform:scale(.94,1.2);transform-origin:0 84.65%;">%</span>
<div class="b" style="left:0px;top:451px;width:740px;height:40px;"></div>
<div class="b" style="left:0px;top:450px;width:740px;height:1px;background:#dee2e6"></div>
<svg class="i" style="left:12px;top:463.5px;" width="20" height="16" viewBox="0 0 640 512" fill="#000" aria-hidden="true"><path d="M192 64C86 64 0 150 0 256S86 448 192 448l256 0c106 0 192-86 192-192s-86-192-192-192L192 64zM496 168a40 40 0 1 1 0 80 40 40 0 1 1 0-80zM392 304a40 40 0 1 1 80 0 40 40 0 1 1 -80 0zM168 200c0-13.3 10.7-24 24-24s24 10.7 24 24l0 32 32 0c13.3 0 24 10.7 24 24s-10.7 24-24 24l-32 0 0 32c0 13.3-10.7 24-24 24s-24-10.7-24-24l0-32-32 0c-13.3 0-24-10.7-24-24s10.7-24 24-24l32 0 0-32z"/></svg>
<span class="t" style="left:40.7px;top:464.7px;font-size:15.36px;color:#000;letter-spacing:-0.03px;">Console</span>
<span class="t" style="left:524.73px;top:464.7px;font-size:15.36px;color:#000;">0</span>
<span class="t" style="left:631.55px;top:464.7px;font-size:15.36px;color:#000;">0,00</span>
<span class="t" style="left:665.35px;top:464.98px;font-size:15.5px;color:#000;font-weight:700;transform:scale(.94,1.2);transform-origin:0 84.65%;">%</span>
<div class="b odd" style="left:0px;top:492px;width:740px;height:40px;"></div>
<div class="b" style="left:0px;top:491px;width:740px;height:1px;background:#dee2e6"></div>
<svg class="i" style="left:14px;top:504.5px;" width="16" height="16" viewBox="0 0 512 512" fill="#000" aria-hidden="true"><path d="M135.2 117.4L109.1 192l293.8 0-26.1-74.6C372.3 104.6 360.2 96 346.6 96L165.4 96c-13.6 0-25.7 8.6-30.2 21.4zM39.6 196.8L74.8 96.3C88.3 57.8 124.6 32 165.4 32l181.2 0c40.8 0 77.1 25.8 90.6 64.3l35.2 100.5c23.2 9.6 39.6 32.5 39.6 59.2l0 144 0 48c0 17.7-14.3 32-32 32l-32 0c-17.7 0-32-14.3-32-32l0-48L96 400l0 48c0 17.7-14.3 32-32 32l-32 0c-17.7 0-32-14.3-32-32l0-48L0 256c0-26.7 16.4-49.6 39.6-59.2zM128 288a32 32 0 1 0 -64 0 32 32 0 1 0 64 0zm288 32a32 32 0 1 0 0-64 32 32 0 1 0 0 64z"/></svg>
<span class="t" style="left:40.7px;top:505.7px;font-size:15.36px;color:#000;letter-spacing:0.36px;">Intégré</span>
<span class="t" style="left:524.73px;top:505.7px;font-size:15.36px;color:#000;">0</span>
<span class="t" style="left:631.55px;top:505.7px;font-size:15.36px;color:#000;">0,00</span>
<span class="t" style="left:665.35px;top:505.98px;font-size:15.5px;color:#000;font-weight:700;transform:scale(.94,1.2);transform-origin:0 84.65%;">%</span>
<div class="b" style="left:0px;top:533px;width:740px;height:40px;"></div>
<div class="b" style="left:0px;top:532px;width:740px;height:1px;background:#dee2e6"></div>
<svg class="i" style="left:12px;top:545.5px;" width="20" height="16" viewBox="0 0 640 512" fill="#000" aria-hidden="true"><path d="M576 64L64 64C28.7 64 0 92.7 0 128L0 384c0 35.3 28.7 64 64 64l120.4 0c24.2 0 46.4-13.7 57.2-35.4l32-64c8.8-17.5 26.7-28.6 46.3-28.6s37.5 11.1 46.3 28.6l32 64c10.8 21.7 33 35.4 57.2 35.4L576 448c35.3 0 64-28.7 64-64l0-256c0-35.3-28.7-64-64-64zM96 240a64 64 0 1 1 128 0A64 64 0 1 1 96 240zm384-64a64 64 0 1 1 0 128 64 64 0 1 1 0-128z"/></svg>
<span class="t" style="left:40.7px;top:546.7px;font-size:15.36px;color:#000;letter-spacing:0.31px;">Virtuel</span>
<span class="t" style="left:524.73px;top:546.7px;font-size:15.36px;color:#000;">0</span>
<span class="t" style="left:631.55px;top:546.7px;font-size:15.36px;color:#000;">0,00</span>
<span class="t" style="left:665.35px;top:546.98px;font-size:15.5px;color:#000;font-weight:700;transform:scale(.94,1.2);transform-origin:0 84.65%;">%</span>
<div class="b" style="left:0px;top:573px;width:740px;height:1px;background:#dee2e6"></div>
</div>
</section>
<section class="card" style="left:1128px;top:789px;width:776px;height:644px">
<svg class="i" style="left:16px;top:19.5px;" width="22.5" height="20" viewBox="0 0 576 512" fill="#212529" aria-hidden="true"><path d="M400 0L176 0c-26.5 0-48.1 21.8-47.1 48.2c.2 5.3 .4 10.6 .7 15.8L24 64C10.7 64 0 74.7 0 88c0 92.6 33.5 157 78.5 200.7c44.3 43.1 98.3 64.8 138.1 75.8c23.4 6.5 39.4 26 39.4 45.6c0 20.9-17 37.9-37.9 37.9L192 448c-17.7 0-32 14.3-32 32s14.3 32 32 32l192 0c17.7 0 32-14.3 32-32s-14.3-32-32-32l-26.1 0C337 448 320 431 320 410.1c0-19.6 15.9-39.2 39.4-45.6c39.9-11 93.9-32.7 138.2-75.8C542.5 245 576 180.6 576 88c0-13.3-10.7-24-24-24L446.4 64c.3-5.2 .5-10.4 .7-15.8C448.1 21.8 426.5 0 400 0zM48.9 112l84.4 0c9.1 90.1 29.2 150.3 51.9 190.6c-24.9-11-50.8-26.5-73.2-48.3c-32-31.1-58-76-63-142.3zM464.1 254.3c-22.4 21.8-48.3 37.3-73.2 48.3c22.7-40.3 42.8-100.5 51.9-190.6l84.4 0c-5.1 66.3-31.1 111.2-63 142.3z"/></svg>
<h2 class="t" style="left:44px;top:20.95px;font-size:19.2px;color:#212529;letter-spacing:0.32px;">Classifications - Aujourd'hui</h2>
<svg class="i" style="left:738px;top:19px;" width="20" height="20" viewBox="0 0 512 512" fill="#8e9194" aria-hidden="true"><path d="M142.9 142.9c-17.5 17.5-30.1 38-37.8 59.8c-5.9 16.7-24.2 25.4-40.8 19.5s-25.4-24.2-19.5-40.8C55.6 150.7 73.2 122 97.6 97.6c87.2-87.2 228.3-87.5 315.8-1L455 55c6.9-6.9 17.2-8.9 26.2-5.2s14.8 12.5 14.8 22.2l0 128c0 13.3-10.7 24-24 24l-8.4 0c0 0 0 0 0 0L344 224c-9.7 0-18.5-5.8-22.2-14.8s-1.7-19.3 5.2-26.2l41.1-41.1c-62.6-61.5-163.1-61.2-225.3 1zM16 312c0-13.3 10.7-24 24-24l7.6 0 .7 0L168 288c9.7 0 18.5 5.8 22.2 14.8s1.7 19.3-5.2 26.2l-41.1 41.1c62.6 61.5 163.1 61.2 225.3-1c17.5-17.5 30.1-38 37.8-59.8c5.9-16.7 24.2-25.4 40.8-19.5s25.4 24.2 19.5 40.8c-10.8 30.6-28.4 59.3-52.9 83.8c-87.2 87.2-228.3 87.5-315.8 1L57 457c-6.9 6.9-17.2 8.9-26.2 5.2S16 449.7 16 440l0-119.6 0-.7 0-7.6z"/></svg>
<div class="fc" style="left:16px;top:56px;width:174px;height:38px;"></div>
<span class="t" style="left:29.2px;top:68.6px;font-size:15.36px;color:#212529;letter-spacing:0.12px;">DecSoft Utils</span>
<svg class="i" style="left:161px;top:69.3px" width="16" height="12" viewBox="0 0 16 12"><path d="M3.3 3.5 L8 8.3 L12.7 3.5" fill="none" stroke="#343a40" stroke-width="1.6" stroke-linecap="round" stroke-linejoin="round"/></svg>
<div class="btn" style="left:206px;top:56px;width:173px;height:38px;"></div>
<span class="t" style="left:264.6px;top:68.6px;font-size:15.36px;color:#6c757d;letter-spacing:-0.28px;">Dates</span>
<span class="b" style="left:311.6px;top:73px;width:0;height:0;border-left:4.2px solid transparent;border-right:4.2px solid transparent;border-top:4.6px solid #6c757d"></span>
<div class="fc" style="left:395px;top:56px;width:174px;height:38px;"></div>
<span class="t" style="left:411.3px;top:68.6px;font-size:15.36px;color:#212529;letter-spacing:-0.13px;">10 / 04 / 2025</span>
<svg class="i" style="left:534.8px;top:65.5px" width="17" height="17" viewBox="0 0 17 17"><rect x="1.6" y="2.6" width="13.8" height="12.8" rx="1.6" fill="none" stroke="#4a4a4a" stroke-width="1.25"/><path d="M1.6 3.6 a1 1 0 0 1 1-1 h11.8 a1 1 0 0 1 1 1 v2.2 h-13.8z M4.3 0.6h1.5v2.6H4.3z M11.2 0.6h1.5v2.6h-1.5z" fill="#4a4a4a"/></svg>
<div class="fc" style="left:585px;top:56px;width:173px;height:38px;"></div>
<span class="t" style="left:601.3px;top:68.6px;font-size:15.36px;color:#212529;letter-spacing:-0.13px;">10 / 04 / 2025</span>
<svg class="i" style="left:723.8px;top:65.5px" width="17" height="17" viewBox="0 0 17 17"><rect x="1.6" y="2.6" width="13.8" height="12.8" rx="1.6" fill="none" stroke="#4a4a4a" stroke-width="1.25"/><path d="M1.6 3.6 a1 1 0 0 1 1-1 h11.8 a1 1 0 0 1 1 1 v2.2 h-13.8z M4.3 0.6h1.5v2.6H4.3z M11.2 0.6h1.5v2.6h-1.5z" fill="#4a4a4a"/></svg>
<div class="b" style="left:16px;top:151px;width:742px;height:475px;border:1px solid #dee2e6;border-radius:0 0 6px 6px"></div>
<div class="b" style="left:315.3px;top:110px;width:138.6px;height:42px;border:1px solid #dee2e6;border-bottom:0;border-radius:6px 6px 0 0;background:#fff"></div>
<svg class="i" style="left:33.2px;top:124px;" width="20" height="16" viewBox="0 0 640 512" fill="#212529" aria-hidden="true"><path d="M579.8 267.7c56.5-56.5 56.5-148 0-204.5c-50-50-128.8-56.5-186.3-15.4l-1.6 1.1c-14.4 10.3-17.7 30.3-7.4 44.6s30.3 17.7 44.6 7.4l1.6-1.1c32.1-22.9 76-19.3 103.8 8.6c31.5 31.5 31.5 82.5 0 114L422.3 334.8c-31.5 31.5-82.5 31.5-114 0c-27.9-27.9-31.5-71.8-8.6-103.8l1.1-1.6c10.3-14.4 6.9-34.4-7.4-44.6s-34.4-6.9-44.6 7.4l-1.1 1.6C206.5 251.2 213 330 263 380c56.5 56.5 148 56.5 204.5 0L579.8 267.7zM60.2 244.3c-56.5 56.5-56.5 148 0 204.5c50 50 128.8 56.5 186.3 15.4l1.6-1.1c14.4-10.3 17.7-30.3 7.4-44.6s-30.3-17.7-44.6-7.4l-1.6 1.1c-32.1 22.9-76 19.3-103.8-8.6C74 372 74 321 105.5 289.5L217.7 177.2c31.5-31.5 82.5-31.5 114 0c27.9 27.9 31.5 71.8 8.6 103.9l-1.1 1.6c-10.3 14.4-6.9 34.4 7.4 44.6s34.4 6.9 44.6-7.4l1.1-1.6C433.5 260.8 427 182 377 132c-56.5-56.5-148-56.5-204.5 0L60.2 244.3z"/></svg>
<span class="t" style="left:58.4px;top:125px;font-size:15.36px;color:#212529;letter-spacing:-1.2px;">URLs</span>
<svg class="i" style="left:126px;top:124px;" width="16" height="16" viewBox="0 0 512 512" fill="#212529" aria-hidden="true"><path d="M217.9 105.9L340.7 228.7c7.2 7.2 11.3 17.1 11.3 27.3s-4.1 20.1-11.3 27.3L217.9 406.1c-6.4 6.4-15 9.9-24 9.9c-18.7 0-33.9-15.2-33.9-33.9l0-62.1L32 320c-17.7 0-32-14.3-32-32l0-64c0-17.7 14.3-32 32-32l128 0 0-62.1c0-18.7 15.2-33.9 33.9-33.9c9 0 17.6 3.6 24 9.9zM352 416l64 0c17.7 0 32-14.3 32-32l0-256c0-17.7-14.3-32-32-32l-64 0c-17.7 0-32-14.3-32-32s14.3-32 32-32l64 0c53 0 96 43 96 96l0 256c0 53-43 96-96 96l-64 0c-17.7 0-32-14.3-32-32s14.3-32 32-32z"/></svg>
<span class="t" style="left:147.3px;top:125px;font-size:15.36px;color:#212529;letter-spacing:-0.2px;">Référents</span>
<svg class="i" style="left:247px;top:124px;" width="16" height="16" viewBox="0 0 512 512" fill="#212529" aria-hidden="true"><path d="M57.7 193l9.4 16.4c8.3 14.5 21.9 25.2 38 29.8L163 255.7c17.2 4.9 29 20.6 29 38.5l0 39.9c0 11 6.2 21 16 25.9s16 14.9 16 25.9l0 39c0 15.6 14.9 26.9 29.9 22.6c16.1-4.6 28.6-17.5 32.7-33.8l2.8-11.2c4.2-16.9 15.2-31.4 30.3-40l8.1-4.6c15-8.5 24.2-24.5 24.2-41.7l0-8.3c0-12.7-5.1-24.9-14.1-33.9l-3.9-3.9c-9-9-21.2-14.1-33.9-14.1L257 256c-11.1 0-22.1-2.9-31.8-8.4l-34.5-19.7c-4.3-2.5-7.6-6.5-9.2-11.2c-3.2-9.6 1.1-20 10.2-24.5l5.9-3c6.6-3.3 14.3-3.9 21.3-1.5l23.2 7.7c8.2 2.7 17.2-.4 21.9-7.5c4.7-7 4.2-16.3-1.2-22.8l-13.6-16.3c-10-12-9.9-29.5 .3-41.3l15.7-18.3c8.8-10.3 10.2-25 3.5-36.7l-2.4-4.2c-3.5-.2-6.9-.3-10.4-.3C163.1 48 84.4 108.9 57.7 193zM464 256c0-36.8-9.6-71.4-26.4-101.5L412 164.8c-15.7 6.3-23.8 23.8-18.5 39.8l16.9 50.7c3.5 10.4 12 18.3 22.6 20.9l29.1 7.3c1.2-9 1.8-18.2 1.8-27.5zM0 256a256 256 0 1 1 512 0A256 256 0 1 1 0 256z"/></svg>
<span class="t" style="left:267.8px;top:125px;font-size:15.36px;color:#212529;letter-spacing:-1.2px;">Pays</span>
<svg class="i" style="left:332px;top:124px;" width="16" height="16" viewBox="0 0 512 512" fill="#212529" aria-hidden="true"><path d="M64 32C28.7 32 0 60.7 0 96L0 416c0 35.3 28.7 64 64 64l384 0c35.3 0 64-28.7 64-64l0-320c0-35.3-28.7-64-64-64L64 32zM96 96l320 0c17.7 0 32 14.3 32 32s-14.3 32-32 32L96 160c-17.7 0-32-14.3-32-32s14.3-32 32-32z"/></svg>
<span class="t" style="left:353.2px;top:125px;font-size:15.36px;color:#212529;letter-spacing:0.12px;">Navigateurs</span>
<svg class="i" style="left:471.2px;top:124px;" width="18" height="16" viewBox="0 0 576 512" fill="#212529" aria-hidden="true"><path d="M64 0C28.7 0 0 28.7 0 64L0 352c0 35.3 28.7 64 64 64l176 0-10.7 32L160 448c-17.7 0-32 14.3-32 32s14.3 32 32 32l256 0c17.7 0 32-14.3 32-32s-14.3-32-32-32l-69.3 0L336 416l176 0c35.3 0 64-28.7 64-64l0-288c0-35.3-28.7-64-64-64L64 0zM512 64l0 224L64 288 64 64l448 0z"/></svg>
<span class="t" style="left:493.5px;top:125px;font-size:15.36px;color:#212529;letter-spacing:-0.38px;">Systèmes</span>
<svg class="i" style="left:593px;top:124px;" width="12" height="16" viewBox="0 0 384 512" fill="#212529" aria-hidden="true"><path d="M16 64C16 28.7 44.7 0 80 0L304 0c35.3 0 64 28.7 64 64l0 384c0 35.3-28.7 64-64 64L80 512c-35.3 0-64-28.7-64-64L16 64zM224 448a32 32 0 1 0 -64 0 32 32 0 1 0 64 0zM304 64L80 64l0 320 224 0 0-320z"/></svg>
<span class="t" style="left:609.3px;top:125px;font-size:15.36px;color:#212529;letter-spacing:0.12px;">Appareils</span>
<div class="b" style="left:33px;top:172px;width:708px;height:436.5px;border:1px solid #dee2e6;border-radius:6px;overflow:hidden;background:#fff">
<div class="b odd" style="left:0px;top:0px;width:706px;height:44px;"></div>
<span class="t" style="left:49.36px;top:13.35px;font-size:19.2px;color:#000;-webkit-text-stroke:.45px #000;">1</span>
<svg class="i" style="left:118.3px;top:11.3px" width="23.4" height="23.4" viewBox="0 0 24 24"><circle cx="12" cy="12" r="11.4" fill="#fff"/><path d="M12 12 L2.13 6.3 A11.4 11.4 0 0 1 21.87 6.3 Z" fill="#e33b2e"/><path d="M12 12 L21.87 6.3 A11.4 11.4 0 0 1 12 23.4 Z" fill="#fcc31e"/><path d="M12 12 L12 23.4 A11.4 11.4 0 0 1 2.13 6.3 Z" fill="#259a48"/><path d="M12 6.3 H21.87 A11.4 11.4 0 0 1 12 23.4 L16.9 14.9 Z" fill="#fcc31e"/><path d="M2.13 6.3 L7.06 14.85 L12 12 L12 6.3 H21.87 A11.4 11.4 0 0 0 2.13 6.3Z" fill="#e33b2e"/><path d="M12 23.4 L16.94 14.85 L12 17.7 L7.06 14.85 L2.13 6.3 A11.4 11.4 0 0 0 12 23.4Z" fill="#259a48"/><circle cx="12" cy="12" r="5.7" fill="#fff"/><circle cx="12" cy="12" r="4.5" fill="#1a73e8"/></svg>
<span class="t" style="left:150.8px;top:14px;font-size:15.36px;color:#000;letter-spacing:0.15px;">Chrome</span>
<span class="t" style="left:649.96px;top:15.1px;font-size:15.36px;color:#000;">15</span>
<div class="b" style="left:0px;top:44px;width:706px;height:43px;"></div>
<div class="b" style="left:0px;top:43px;width:706px;height:1px;background:#dee2e6"></div>
<span class="t" style="left:49.36px;top:56.35px;font-size:19.2px;color:#000;-webkit-text-stroke:.45px #000;">2</span>
<svg class="i" style="left:118.3px;top:54.3px" width="23.4" height="23.4" viewBox="0 0 24 24"><circle cx="12" cy="12" r="11.4" fill="#fff"/><path d="M12 12 L2.13 6.3 A11.4 11.4 0 0 1 21.87 6.3 Z" fill="#e33b2e"/><path d="M12 12 L21.87 6.3 A11.4 11.4 0 0 1 12 23.4 Z" fill="#fcc31e"/><path d="M12 12 L12 23.4 A11.4 11.4 0 0 1 2.13 6.3 Z" fill="#259a48"/><path d="M12 6.3 H21.87 A11.4 11.4 0 0 1 12 23.4 L16.9 14.9 Z" fill="#fcc31e"/><path d="M2.13 6.3 L7.06 14.85 L12 12 L12 6.3 H21.87 A11.4 11.4 0 0 0 2.13 6.3Z" fill="#e33b2e"/><path d="M12 23.4 L16.94 14.85 L12 17.7 L7.06 14.85 L2.13 6.3 A11.4 11.4 0 0 0 12 23.4Z" fill="#259a48"/><circle cx="12" cy="12" r="5.7" fill="#fff"/><circle cx="12" cy="12" r="4.5" fill="#1a73e8"/></svg>
<span class="t" style="left:150.8px;top:57px;font-size:15.36px;color:#000;letter-spacing:0.42px;">Mobile Chrome</span>
<span class="t" style="left:649.96px;top:58.1px;font-size:15.36px;color:#000;">15</span>
<div class="b odd" style="left:0px;top:87px;width:706px;height:44px;"></div>
<div class="b" style="left:0px;top:86px;width:706px;height:1px;background:#dee2e6"></div>
<span class="t" style="left:49.36px;top:100.35px;font-size:19.2px;color:#000;-webkit-text-stroke:.45px #000;">3</span>
<svg class="i" style="left:118.3px;top:98.3px" width="23.4" height="23.4" viewBox="0 0 24 24"><defs><linearGradient id="b2_eg1" x1="0" y1="0" x2="1" y2="1"><stop offset="0" stop-color="#35c1f1"/><stop offset=".55" stop-color="#2fc98f"/><stop offset="1" stop-color="#6fe36b"/></linearGradient><linearGradient id="b2_eg2" x1="0" y1="0" x2="1" y2="1"><stop offset="0" stop-color="#1b9de2"/><stop offset="1" stop-color="#0f56b0"/></linearGradient></defs><circle cx="12" cy="12" r="11.4" fill="url(#b2_eg1)"/><path d="M.7 12.6 C1 6 6.5 3.4 11.2 4.3 C7 5.5 5.6 9.5 6.3 13 C7.2 17.7 11.5 21 17 20.3 C14.5 22.8 10.6 24 7 22.7 C3 21.2 .5 17 .7 12.6Z" fill="url(#b2_eg2)"/><path d="M6.3 14.5 C7 19 12 22 17.5 20 C19.5 19.2 21 17.8 21.8 16.6 C18.5 18.5 14.2 18 12.4 15.3 C11.4 13.8 11.7 12.3 12.8 11.4 C10.3 9.7 6 10.3 6.3 14.5Z" fill="#114a8b"/><path d="M12.8 11.4 C11.7 12.3 11.4 13.8 12.4 15.3 C13.4 16.4 15 16.2 16.6 15.9 L22.7 15 C23.3 13.6 23.4 12.6 23.4 12 C21 12.5 18 12 15.5 10.2 C14.5 10.3 13.5 10.8 12.8 11.4Z" fill="#f2f2f2"/></svg>
<span class="t" style="left:150.8px;top:101px;font-size:15.36px;color:#000;letter-spacing:-0.42px;">Edge</span>
<span class="t" style="left:649.96px;top:102.1px;font-size:15.36px;color:#000;">12</span>
<div class="b" style="left:0px;top:131px;width:706px;height:43px;"></div>
<div class="b" style="left:0px;top:130px;width:706px;height:1px;background:#dee2e6"></div>
<span class="t" style="left:49.36px;top:143.35px;font-size:19.2px;color:#000;-webkit-text-stroke:.45px #000;">4</span>
<svg class="i" style="left:118.3px;top:141.3px" width="23.4" height="23.4" viewBox="0 0 24 24"><defs><radialGradient id="b3_fg1" cx=".75" cy=".15" r="1.1"><stop offset="0" stop-color="#fff44f"/><stop offset=".3" stop-color="#ff980e"/><stop offset=".6" stop-color="#ff3647"/><stop offset="1" stop-color="#e31587"/></radialGradient><radialGradient id="b3_fg2" cx=".5" cy=".4" r=".6"><stop offset="0" stop-color="#a35cf0"/><stop offset="1" stop-color="#5b2bd0"/></radialGradient></defs><path d="M14.2 .3 C15 2.6 17.5 3.4 19.5 5.6 C21 4.8 20.8 3.4 20.8 3.4 C23 6 23.6 9.4 23.4 12.6 C23 19 18 23.6 12 23.6 C5.5 23.6 .5 18.6 .5 12.4 C.5 9.2 1.9 6.4 3.6 4.4 C3.5 5.4 3.8 6.4 4.2 7 C5.2 5.6 6.6 4.6 8 4.2 C10 3.6 13.4 3 14.2 .3Z" fill="url(#b3_fg1)"/><circle cx="12.2" cy="13" r="5.6" fill="url(#b3_fg2)"/><path d="M4.5 8.6 C6.5 7.2 9.5 7.4 11 9.2 C12.5 9.2 13.8 10 13.6 10.8 C12.6 11.2 11.4 11.4 10.6 12.4 C9.4 12.4 8.2 11.6 6.8 12 C5.4 12.4 4.4 11 4.5 8.6Z" fill="#ff9a1a"/><path d="M15.5 5.5 C18.5 7.5 20 11 19 14.5 C18 18 14.6 20 11.5 19.6 C15 19 17.6 16.4 17.6 13 C17.6 10 16.5 8 15.5 5.5Z" fill="#ffbd2e" opacity=".9"/></svg>
<span class="t" style="left:150.8px;top:144px;font-size:15.36px;color:#000;letter-spacing:0.03px;">Firefox</span>
<span class="t" style="left:654.23px;top:145.1px;font-size:15.36px;color:#000;">4</span>
<div class="b odd" style="left:0px;top:174px;width:706px;height:44px;"></div>
<div class="b" style="left:0px;top:173px;width:706px;height:1px;background:#dee2e6"></div>
<span class="t" style="left:49.36px;top:187.35px;font-size:19.2px;color:#000;-webkit-text-stroke:.45px #000;">5</span>
<svg class="i" style="left:118.3px;top:185.3px" width="23.4" height="23.4" viewBox="0 0 24 24"><rect x=".5" y="1.2" width="23" height="22.6" rx="5.4" fill="#dcdcdc"/><rect x=".5" y=".3" width="23" height="22.4" rx="5.4" fill="#f7f7f7"/><circle cx="12" cy="11.6" r="10.2" fill="#1f8be6"/><circle cx="12" cy="11.6" r="8.9" fill="none" stroke="#5ab0f6" stroke-width=".8"/><path d="M18.9 4.9 L10.8 10.6 L13 12.8Z" fill="#e9413a"/><path d="M5.1 18.5 L10.8 10.6 L13 12.8Z" fill="#fff"/></svg>
<span class="t" style="left:150.8px;top:188px;font-size:15.36px;color:#000;letter-spacing:0.21px;">Mobile Safari</span>
<span class="t" style="left:654.23px;top:189.1px;font-size:15.36px;color:#000;">3</span>
<div class="b" style="left:0px;top:218px;width:706px;height:43px;"></div>
<div class="b" style="left:0px;top:217px;width:706px;height:1px;background:#dee2e6"></div>
<span class="t" style="left:49.36px;top:230.35px;font-size:19.2px;color:#000;-webkit-text-stroke:.45px #000;">6</span>
<svg class="i" style="left:118.3px;top:228.3px" width="23.4" height="23.4" viewBox="0 0 24 24"><defs><linearGradient id="b5_og" x1="0" y1="0" x2="0" y2="1"><stop offset="0" stop-color="#ff1b2d"/><stop offset="1" stop-color="#b30b1b"/></linearGradient></defs><circle cx="12" cy="12" r="11.5" fill="url(#b5_og)"/><ellipse cx="11.6" cy="12" rx="5.2" ry="8.2" fill="#fff"/></svg>
<span class="t" style="left:150.8px;top:231px;font-size:15.36px;color:#000;letter-spacing:0.05px;">Opera</span>
<span class="t" style="left:654.23px;top:232.1px;font-size:15.36px;color:#000;">2</span>
<div class="b odd" style="left:0px;top:261px;width:706px;height:44px;"></div>
<div class="b" style="left:0px;top:260px;width:706px;height:1px;background:#dee2e6"></div>
<span class="t" style="left:49.36px;top:274.35px;font-size:19.2px;color:#000;-webkit-text-stroke:.45px #000;">7</span>
<svg class="i" style="left:118.3px;top:272.3px" width="23.4" height="23.4" viewBox="0 0 24 24"><rect x=".5" y="1.2" width="23" height="22.6" rx="5.4" fill="#dcdcdc"/><rect x=".5" y=".3" width="23" height="22.4" rx="5.4" fill="#f7f7f7"/><circle cx="12" cy="11.6" r="10.2" fill="#1f8be6"/><circle cx="12" cy="11.6" r="8.9" fill="none" stroke="#5ab0f6" stroke-width=".8"/><path d="M18.9 4.9 L10.8 10.6 L13 12.8Z" fill="#e9413a"/><path d="M5.1 18.5 L10.8 10.6 L13 12.8Z" fill="#fff"/></svg>
<span class="t" style="left:150.8px;top:275px;font-size:15.36px;color:#000;letter-spacing:-0.28px;">Safari</span>
<span class="t" style="left:654.23px;top:276.1px;font-size:15.36px;color:#000;">2</span>
<div class="b" style="left:0px;top:305px;width:706px;height:43px;"></div>
<div class="b" style="left:0px;top:304px;width:706px;height:1px;background:#dee2e6"></div>
<span class="t" style="left:49.36px;top:317.35px;font-size:19.2px;color:#000;-webkit-text-stroke:.45px #000;">8</span>
<svg class="i" style="left:118.3px;top:315.3px" width="23.4" height="23.4" viewBox="0 0 24 24"><circle cx="12" cy="12.2" r="11.3" fill="#f6f5f3" stroke="#e6e4e1" stroke-width=".7"/><path d="M5.9 7.4 L12 13.6 L18.1 7.4 M12 13.4 V19.8" fill="none" stroke="#e2101d" stroke-width="2.5" stroke-linecap="round"/></svg>
<span class="t" style="left:150.8px;top:318px;font-size:15.36px;color:#000;letter-spacing:-0.5px;">Yandex</span>
<span class="t" style="left:654.23px;top:319.1px;font-size:15.36px;color:#000;">2</span>
<div class="b odd" style="left:0px;top:348px;width:706px;height:44px;"></div>
<div class="b" style="left:0px;top:347px;width:706px;height:1px;background:#dee2e6"></div>
<span class="t" style="left:49.36px;top:361.35px;font-size:19.2px;color:#000;-webkit-text-stroke:.45px #000;">9</span>
<svg class="i" style="left:118.3px;top:359.3px" width="23.4" height="23.4" viewBox="0 0 24 24"><circle cx="12" cy="12" r="11.4" fill="#fff"/><path d="M12 12 L2.13 6.3 A11.4 11.4 0 0 1 21.87 6.3 Z" fill="#e33b2e"/><path d="M12 12 L21.87 6.3 A11.4 11.4 0 0 1 12 23.4 Z" fill="#fcc31e"/><path d="M12 12 L12 23.4 A11.4 11.4 0 0 1 2.13 6.3 Z" fill="#259a48"/><path d="M12 6.3 H21.87 A11.4 11.4 0 0 1 12 23.4 L16.9 14.9 Z" fill="#fcc31e"/><path d="M2.13 6.3 L7.06 14.85 L12 12 L12 6.3 H21.87 A11.4 11.4 0 0 0 2.13 6.3Z" fill="#e33b2e"/><path d="M12 23.4 L16.94 14.85 L12 17.7 L7.06 14.85 L2.13 6.3 A11.4 11.4 0 0 0 12 23.4Z" fill="#259a48"/><circle cx="12" cy="12" r="5.7" fill="#fff"/><circle cx="12" cy="12" r="4.5" fill="#1a73e8"/></svg>
<span class="t" style="left:150.8px;top:362px;font-size:15.36px;color:#000;letter-spacing:0.12px;">Chrome WebView</span>
<span class="t" style="left:654.23px;top:363.1px;font-size:15.36px;color:#000;">1</span>
<div class="b" style="left:0px;top:392px;width:706px;height:43px;"></div>
<div class="b" style="left:0px;top:391px;width:706px;height:1px;background:#dee2e6"></div>
<span class="t" style="left:43px;top:404.35px;font-size:19.2px;color:#000;letter-spacing:2.05px;-webkit-text-stroke:.45px #000;">10</span>
<svg class="i" style="left:118.3px;top:402.3px" width="23.4" height="23.4" viewBox="0 0 24 24"><defs><linearGradient id="b9_qg" x1="0" y1="0" x2="1" y2="1"><stop offset="0" stop-color="#57e08c"/><stop offset=".5" stop-color="#3a9fd0"/><stop offset="1" stop-color="#2f62d6"/></linearGradient></defs><circle cx="12" cy="12" r="11.4" fill="url(#b9_qg)"/><path d="M12 .6 V23.4 M.6 12 H23.4 M3 5.6 Q12 9 21 5.6 M3 18.4 Q12 15 21 18.4" fill="none" stroke="#2a6fc0" stroke-opacity=".45" stroke-width="1"/></svg>
<span class="t" style="left:150.8px;top:405px;font-size:15.36px;color:#000;letter-spacing:0.16px;">Quark</span>
<span class="t" style="left:654.23px;top:406.1px;font-size:15.36px;color:#000;">1</span>
<div class="b" style="left:0px;top:433.5px;width:706px;height:1px;background:#dee2e6"></div>
</div>
</section>
<footer>
<div class="hr" style="left:336px;top:1517px;width:1568px"></div>
<span class="t" style="left:1048px;top:1552.4px;font-size:15.36px;color:#111;letter-spacing:-0.06px;">DecSoft Stats 2025.4</span>
<span class="t" style="left:1022px;top:1584px;font-size:15.36px;color:#61676d;letter-spacing:0.08px;">FAQ - Contactez - Avis légal</span>
<svg class="i" style="left:1053.8px;top:1616.6px;" width="14" height="14" viewBox="0 0 512 512" fill="#999" aria-hidden="true"><path d="M256 512A256 256 0 1 0 256 0a256 256 0 1 0 0 512zM199.4 312.6c31.2 31.2 81.9 31.2 113.1 0c9.4-9.4 24.6-9.4 33.9 0s9.4 24.6 0 33.9c-50 50-131 50-181 0s-50-131 0-181s131-50 181 0c9.4 9.4 9.4 24.6 0 33.9s-24.6 9.4-33.9 0c-31.2-31.2-81.9-31.2-113.1 0s-31.2 81.9 0 113.1z"/></svg>
<span class="t" style="left:1072.5px;top:1617.62px;font-size:13.44px;color:#999;letter-spacing:0.1px;">2025 DecSoft Utils</span>
</footer>
</main>
</div>
</body>
</html>
